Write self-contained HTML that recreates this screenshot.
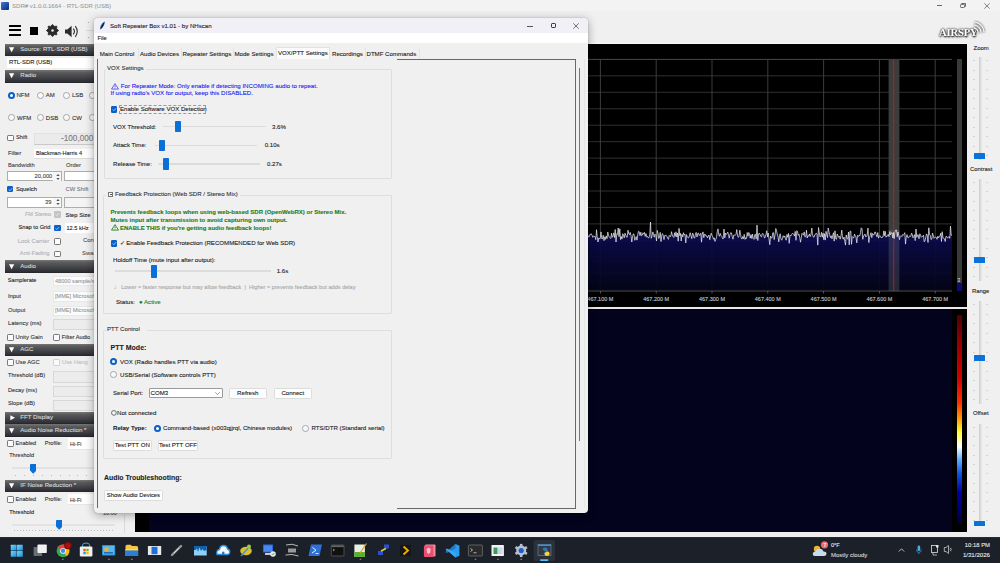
<!DOCTYPE html><html><head><meta charset="utf-8"><style>
*{margin:0;padding:0;box-sizing:border-box}
html,body{width:1000px;height:563px;overflow:hidden;background:#f0f0f0;font-family:"Liberation Sans",sans-serif;position:relative}
.a{position:absolute}
.t{position:absolute;line-height:1;white-space:nowrap;-webkit-text-stroke:0.1px currentColor}
</style></head><body>

<div class="a" style="left:0px;top:0px;width:1000px;height:11px;background:#f3f3f3"></div>
<div class="a" style="left:135px;top:42.6px;width:832.3px;height:1.1999999999999957px;background:#f8f8f8"></div>
<div class="a" style="left:1px;top:2px;width:8px;height:8px;background:linear-gradient(135deg,#3b7bd6,#0a2a7a);border-radius:1px"></div>
<div class="t" style="left:12px;top:3.28px;font-size:6.05px;color:#a0a0a0;">SDR# v1.0.0.1664 - RTL-SDR (USB)</div>
<div class="a" style="left:936.7px;top:5px;width:5.699999999999932px;height:0.7999999999999998px;background:#6a6a6a"></div>
<div class="a" style="left:960.3px;top:3.8px;width:4.900000000000091px;height:4.3999999999999995px;border:0.8px solid #6a6a6a;border-radius:1.2px"></div>
<div class="a" style="left:961.3px;top:2.8px;width:4.900000000000091px;height:4.4px;border-top:0.8px solid #6a6a6a;border-right:0.8px solid #6a6a6a;border-radius:1.2px"></div>
<svg class="a" style="left:984px;top:2.8px" width="6" height="6"><path d="M0.3 0.3L5.7 5.7M5.7 0.3L0.3 5.7" stroke="#6a6a6a" stroke-width="0.8"/></svg>
<div class="a" style="left:9px;top:25px;width:12.3px;height:2.3000000000000007px;background:#000;border-radius:0.5px"></div>
<div class="a" style="left:9px;top:29.2px;width:12.3px;height:2.3000000000000007px;background:#000;border-radius:0.5px"></div>
<div class="a" style="left:9px;top:33.5px;width:12.3px;height:2.299999999999997px;background:#000;border-radius:0.5px"></div>
<div class="a" style="left:29.5px;top:26.5px;width:8.5px;height:8.5px;background:#000"></div>
<svg class="a" style="left:46px;top:24.2px" width="13" height="13"><polygon points="6.50,0.40 8.18,2.43 10.81,2.19 10.57,4.82 12.60,6.50 10.57,8.18 10.81,10.81 8.18,10.57 6.50,12.60 4.82,10.57 2.19,10.81 2.43,8.18 0.40,6.50 2.43,4.82 2.19,2.19 4.82,2.43" fill="#2a2a2a" stroke="#2a2a2a" stroke-width="0.9" stroke-linejoin="round"/><circle cx="6.5" cy="6.5" r="1.25" fill="#f0f0f0"/></svg>
<svg class="a" style="left:64px;top:24.5px" width="15" height="13"><path d="M1 4.6H3.3L7.6 0.8V12.2L3.3 8.4H1z" fill="#2c2c2c"/><path d="M9.3 3.6Q11.6 6.5 9.3 9.4" stroke="#2c2c2c" stroke-width="1.1" fill="none"/><path d="M11.3 1.2Q15.2 6.5 11.3 11.8" stroke="#2c2c2c" stroke-width="1.1" fill="none"/></svg>
<div class="a" style="left:86px;top:29.5px;width:8px;height:1.5px;background:#dcdcdc"></div>
<div class="a" style="left:88.2px;top:21.5px;width:0.5999999999999943px;height:1.0px;background:#aaa"></div>
<div class="a" style="left:88.2px;top:37px;width:0.5999999999999943px;height:1px;background:#aaa"></div>
<div class="a" style="left:5px;top:44px;width:120px;height:12px;background:linear-gradient(#767676,#5a5a5a 20%,#44454a 55%,#2e3036 88%,#222428)"></div>
<svg class="a" style="left:9px;top:47.0px" width="6" height="6"><path d="M0 0.3H5.2L2.6 5.3z" fill="#fff"/></svg>
<div class="t" style="left:20.3px;top:46.16px;font-size:6.1px;color:#d4d8de;">Source: RTL-SDR (USB)</div>
<div class="a" style="left:7px;top:58px;width:118px;height:10px;background:#fff"></div>
<div class="t" style="left:9px;top:60.46px;font-size:5.9px;color:#222;">RTL-SDR (USB)</div>
<div class="a" style="left:5px;top:70px;width:120px;height:12.5px;background:linear-gradient(#767676,#5a5a5a 20%,#44454a 55%,#2e3036 88%,#222428)"></div>
<svg class="a" style="left:9px;top:73.25px" width="6" height="6"><path d="M0 0.3H5.2L2.6 5.3z" fill="#fff"/></svg>
<div class="t" style="left:20.3px;top:72.41px;font-size:6.1px;color:#d4d8de;">Radio</div>
<svg class="a" style="left:8px;top:91.5px" width="7" height="7"><circle cx="3.5" cy="3.5" r="3.5" fill="#0a5fc8"/><circle cx="3.5" cy="3.5" r="1.5" fill="#fff"/></svg>
<div class="t" style="left:16.5px;top:92.21px;font-size:6.0px;color:#333;">NFM</div>
<svg class="a" style="left:36.5px;top:91.5px" width="7" height="7"><circle cx="3.5" cy="3.5" r="3.05" fill="#f8f8f8" stroke="#8a8a8a" stroke-width="0.7"/></svg>
<div class="t" style="left:45.8px;top:92.21px;font-size:6.0px;color:#333;">AM</div>
<svg class="a" style="left:63px;top:91.5px" width="7" height="7"><circle cx="3.5" cy="3.5" r="3.05" fill="#f8f8f8" stroke="#8a8a8a" stroke-width="0.7"/></svg>
<div class="t" style="left:72px;top:92.21px;font-size:6.0px;color:#333;">LSB</div>
<svg class="a" style="left:89px;top:91.5px" width="7" height="7"><circle cx="3.5" cy="3.5" r="3.05" fill="#f8f8f8" stroke="#8a8a8a" stroke-width="0.7"/></svg>
<svg class="a" style="left:8px;top:114.0px" width="7" height="7"><circle cx="3.5" cy="3.5" r="3.05" fill="#f8f8f8" stroke="#8a8a8a" stroke-width="0.7"/></svg>
<div class="t" style="left:17px;top:114.71px;font-size:6.0px;color:#333;">WFM</div>
<svg class="a" style="left:36.5px;top:114.0px" width="7" height="7"><circle cx="3.5" cy="3.5" r="3.05" fill="#f8f8f8" stroke="#8a8a8a" stroke-width="0.7"/></svg>
<div class="t" style="left:45.8px;top:114.71px;font-size:6.0px;color:#333;">DSB</div>
<svg class="a" style="left:63px;top:114.0px" width="7" height="7"><circle cx="3.5" cy="3.5" r="3.05" fill="#f8f8f8" stroke="#8a8a8a" stroke-width="0.7"/></svg>
<div class="t" style="left:72px;top:114.71px;font-size:6.0px;color:#333;">CW</div>
<svg class="a" style="left:89px;top:114.0px" width="7" height="7"><circle cx="3.5" cy="3.5" r="3.05" fill="#f8f8f8" stroke="#8a8a8a" stroke-width="0.7"/></svg>
<div class="a" style="left:7px;top:134.75px;width:6.5px;height:6.5px;border-radius:1.2px;border:0.7px solid #777;background:#fbfbfb"></div>
<div class="t" style="left:16px;top:135.45px;font-size:5.7px;color:#333;">Shift</div>
<div class="a" style="left:34px;top:132.5px;width:91px;height:12.0px;background:#ebebeb;border-top:0.7px solid #e2e2e2;border-bottom:0.9px solid #c8c8c8;border-left:0.7px solid #e0e0e0"></div>
<div class="t" style="left:61px;top:134.85px;font-size:8.2px;color:#7a7a7a;">-100,000</div>
<div class="t" style="left:8px;top:150.96px;font-size:5.9px;color:#333;">Filter</div>
<div class="a" style="left:34px;top:149px;width:91px;height:9.5px;background:#fff;border-bottom:0.7px solid #ddd"></div>
<div class="t" style="left:36px;top:151.30px;font-size:5.6px;color:#222;">Blackman-Harris 4</div>
<div class="t" style="left:8px;top:162.55px;font-size:5.7px;color:#444;">Bandwidth</div>
<div class="t" style="left:66px;top:162.50px;font-size:5.8px;color:#444;">Order</div>
<div class="a" style="left:7px;top:171.4px;width:54.6px;height:10.0px;background:#fff;border:0.8px solid #adadad"></div>
<div class="a" style="left:53.3px;top:172px;width:7.700000000000003px;height:9px;background:#f6f6f6"></div>
<div class="t" style="left:34.6px;top:173.80px;font-size:5.8px;color:#444;">20,000</div>
<svg class="a" style="left:55.5px;top:172.8px" width="4" height="8"><path d="M0.3 3L2 1L3.7 3z" fill="#555"/><path d="M0.3 5L2 7L3.7 5z" fill="#555"/></svg>
<div class="a" style="left:64px;top:171.4px;width:61px;height:10.0px;background:#fff;border:0.8px solid #adadad"></div>
<div class="a" style="left:6.6px;top:185.6px;width:6.8px;height:6.8px;border-radius:1.2px;background:#0b5fc5"><svg class="a" style="left:0;top:0" width="6.8" height="6.8" viewBox="0 0 10 10"><path d="M2.5 5.2L4.3 7L7.6 3.3" stroke="#fff" stroke-width="0.9" fill="none"/></svg></div>
<div class="t" style="left:16px;top:186.50px;font-size:5.8px;color:#222;">Squelch</div>
<div class="t" style="left:65.6px;top:186.70px;font-size:5.8px;color:#707888;">CW Shift</div>
<div class="a" style="left:7px;top:197px;width:54.6px;height:10.5px;background:#fff;border:0.8px solid #adadad"></div>
<div class="a" style="left:53.3px;top:197.6px;width:7.700000000000003px;height:9.400000000000006px;background:#f6f6f6"></div>
<div class="t" style="left:45px;top:199.50px;font-size:5.8px;color:#444;">39</div>
<svg class="a" style="left:55.5px;top:198.3px" width="4" height="8"><path d="M0.3 3L2 1L3.7 3z" fill="#555"/><path d="M0.3 5L2 7L3.7 5z" fill="#555"/></svg>
<div class="a" style="left:64px;top:197px;width:61px;height:10.5px;background:#f4f4f4;border:0.8px solid #adadad"></div>
<div class="t" style="left:24.9px;top:212.10px;font-size:5.6px;color:#b0b0b8;">FM Stereo</div>
<div class="a" style="left:54.3px;top:211.35px;width:6.5px;height:6.5px;border-radius:1.2px;background:#c4c4c4"><svg class="a" style="left:0;top:0" width="6.5" height="6.5" viewBox="0 0 10 10"><path d="M2.5 5.2L4.3 7L7.6 3.3" stroke="#fff" stroke-width="0.9" fill="none"/></svg></div>
<div class="t" style="left:65.6px;top:212.50px;font-size:5.8px;color:#222;">Step Size</div>
<div class="t" style="left:18.5px;top:224.85px;font-size:5.7px;color:#222;">Snap to Grid</div>
<div class="a" style="left:54.3px;top:224.75px;width:6.5px;height:6.5px;border-radius:1.2px;background:#0b5fc5"><svg class="a" style="left:0;top:0" width="6.5" height="6.5" viewBox="0 0 10 10"><path d="M2.5 5.2L4.3 7L7.6 3.3" stroke="#fff" stroke-width="0.9" fill="none"/></svg></div>
<div class="a" style="left:65px;top:223px;width:60px;height:9.599999999999994px;background:#fff"></div>
<div class="t" style="left:66.5px;top:225.60px;font-size:5.6px;color:#222;">12.5 kHz</div>
<div class="t" style="left:17.8px;top:238.53px;font-size:5.75px;color:#b0b0b8;">Lock Carrier</div>
<div class="a" style="left:54.3px;top:238.25px;width:6.5px;height:6.5px;border-radius:1.2px;border:0.7px solid #777;background:#fbfbfb"></div>
<div class="t" style="left:83px;top:238.46px;font-size:5.9px;color:#555;">Con</div>
<div class="t" style="left:19.8px;top:251.00px;font-size:5.8px;color:#b0b0b8;">Anti-Fading</div>
<div class="a" style="left:54.3px;top:250.75px;width:6.5px;height:6.5px;border-radius:1.2px;border:0.7px solid #777;background:#fbfbfb"></div>
<div class="t" style="left:82px;top:250.96px;font-size:5.9px;color:#555;">Swa</div>
<div class="a" style="left:5px;top:260.3px;width:120px;height:12.800000000000011px;background:linear-gradient(#767676,#5a5a5a 20%,#44454a 55%,#2e3036 88%,#222428)"></div>
<svg class="a" style="left:9px;top:263.70000000000005px" width="6" height="6"><path d="M0 0.3H5.2L2.6 5.3z" fill="#fff"/></svg>
<div class="t" style="left:20.3px;top:262.86px;font-size:6.1px;color:#d4d8de;">Audio</div>
<div class="t" style="left:7.8px;top:277.80px;font-size:5.6px;color:#222;">Samplerate</div>
<div class="a" style="left:53.3px;top:275.7px;width:71.7px;height:10.300000000000011px;background:#fbfbfb;border:0.6px solid #e8e8e8"></div>
<div class="t" style="left:55px;top:278.50px;font-size:5.6px;color:#999;">48000 sample/s</div>
<div class="t" style="left:8px;top:293.50px;font-size:5.8px;color:#333;">Input</div>
<div class="a" style="left:53.3px;top:290.5px;width:71.7px;height:11.0px;background:#fbfbfb;border:0.6px solid #e8e8e8"></div>
<div class="t" style="left:55px;top:293.80px;font-size:5.6px;color:#999;">[MME] Microsoft</div>
<div class="t" style="left:8px;top:307.50px;font-size:5.8px;color:#444;">Output</div>
<div class="a" style="left:53.3px;top:305.5px;width:71.7px;height:10.0px;background:#fbfbfb;border:0.6px solid #e8e8e8"></div>
<div class="t" style="left:55px;top:308.30px;font-size:5.6px;color:#999;">[MME] Microsoft</div>
<div class="t" style="left:8px;top:321.20px;font-size:5.8px;color:#333;">Latency (ms)</div>
<div class="a" style="left:53.3px;top:319px;width:71.7px;height:11px;background:#ececec;border:0.7px solid #d8d8d8"></div>
<div class="a" style="left:7.1px;top:334.05px;width:6.5px;height:6.5px;border-radius:1.2px;border:0.7px solid #777;background:#fbfbfb"></div>
<div class="t" style="left:15.6px;top:334.50px;font-size:5.8px;color:#333;">Unity Gain</div>
<div class="a" style="left:53.3px;top:334.05px;width:6.5px;height:6.5px;border-radius:1.2px;border:0.7px solid #777;background:#fbfbfb"></div>
<div class="t" style="left:61.8px;top:334.55px;font-size:5.7px;color:#333;">Filter Audio</div>
<div class="a" style="left:5px;top:344px;width:120px;height:12px;background:linear-gradient(#767676,#5a5a5a 20%,#44454a 55%,#2e3036 88%,#222428)"></div>
<svg class="a" style="left:9px;top:347.0px" width="6" height="6"><path d="M0 0.3H5.2L2.6 5.3z" fill="#fff"/></svg>
<div class="t" style="left:20.3px;top:346.16px;font-size:6.1px;color:#d4d8de;">AGC</div>
<div class="a" style="left:7.1px;top:359.25px;width:6.5px;height:6.5px;border-radius:1.2px;border:0.7px solid #777;background:#fbfbfb"></div>
<div class="t" style="left:15.6px;top:359.70px;font-size:5.8px;color:#333;">Use AGC</div>
<div class="a" style="left:53.3px;top:359.25px;width:6.5px;height:6.5px;border-radius:1.2px;border:0.7px solid #d0d0d0;background:#fbfbfb"></div>
<div class="t" style="left:62px;top:359.70px;font-size:5.8px;color:#c0c0c8;">Use Hang</div>
<div class="t" style="left:8px;top:373.10px;font-size:5.6px;color:#333;">Threshold (dB)</div>
<div class="a" style="left:53.3px;top:370.5px;width:71.7px;height:12.0px;background:#ececec;border:0.7px solid #d8d8d8"></div>
<div class="t" style="left:8px;top:388.05px;font-size:5.7px;color:#333;">Decay (ms)</div>
<div class="a" style="left:53.3px;top:386px;width:71.7px;height:10.5px;background:#ececec;border:0.7px solid #d8d8d8"></div>
<div class="t" style="left:8px;top:401.05px;font-size:5.7px;color:#333;">Slope (dB)</div>
<div class="a" style="left:53.3px;top:399.5px;width:71.7px;height:11.0px;background:#ececec;border:0.7px solid #d8d8d8"></div>
<div class="a" style="left:5px;top:412px;width:120px;height:12px;background:linear-gradient(#767676,#5a5a5a 20%,#44454a 55%,#2e3036 88%,#222428)"></div>
<svg class="a" style="left:9.5px;top:415.2px" width="6" height="6"><path d="M0.3 0.3L5 2.8L0.3 5.3z" fill="#fff"/></svg>
<div class="t" style="left:20.3px;top:414.16px;font-size:6.1px;color:#d4d8de;">FFT Display</div>
<div class="a" style="left:5px;top:424.2px;width:120px;height:12.800000000000011px;background:linear-gradient(#767676,#5a5a5a 20%,#44454a 55%,#2e3036 88%,#222428)"></div>
<svg class="a" style="left:9px;top:427.6px" width="6" height="6"><path d="M0 0.3H5.2L2.6 5.3z" fill="#fff"/></svg>
<div class="t" style="left:20.3px;top:426.76px;font-size:6.1px;color:#d4d8de;">Audio Noise Reduction *</div>
<div class="a" style="left:7.1px;top:440.25px;width:6.5px;height:6.5px;border-radius:1.2px;border:0.7px solid #777;background:#fbfbfb"></div>
<div class="t" style="left:15.6px;top:440.80px;font-size:5.6px;color:#333;">Enabled</div>
<div class="t" style="left:44.7px;top:440.80px;font-size:5.6px;color:#333;">Profile:</div>
<div class="a" style="left:68px;top:437.5px;width:57px;height:12.0px;background:#fff;border-bottom:0.7px solid #e6e6e6"></div>
<div class="t" style="left:70px;top:441.70px;font-size:5.4px;color:#333;">Hi-Fi</div>
<div class="t" style="left:9.2px;top:453.10px;font-size:5.6px;color:#333;">Threshold</div>
<div class="a" style="left:12px;top:467.3px;width:113px;height:2.0px;background:#e2e2e2;border-radius:1px"></div>
<div class="a" style="left:15.0px;top:474.5px;width:0.5999999999999996px;height:1.0px;background:#b8b8b8"></div>
<div class="a" style="left:23.916666666666664px;top:474.5px;width:0.6000000000000014px;height:1.0px;background:#b8b8b8"></div>
<div class="a" style="left:32.83333333333333px;top:474.5px;width:0.6000000000000014px;height:1.0px;background:#b8b8b8"></div>
<div class="a" style="left:41.75px;top:474.5px;width:0.6000000000000014px;height:1.0px;background:#b8b8b8"></div>
<div class="a" style="left:50.666666666666664px;top:474.5px;width:0.6000000000000014px;height:1.0px;background:#b8b8b8"></div>
<div class="a" style="left:59.583333333333336px;top:474.5px;width:0.6000000000000014px;height:1.0px;background:#b8b8b8"></div>
<div class="a" style="left:68.5px;top:474.5px;width:0.5999999999999943px;height:1.0px;background:#b8b8b8"></div>
<div class="a" style="left:77.41666666666666px;top:474.5px;width:0.5999999999999943px;height:1.0px;background:#b8b8b8"></div>
<div class="a" style="left:86.33333333333333px;top:474.5px;width:0.5999999999999943px;height:1.0px;background:#b8b8b8"></div>
<div class="a" style="left:95.25px;top:474.5px;width:0.5999999999999943px;height:1.0px;background:#b8b8b8"></div>
<div class="a" style="left:104.16666666666667px;top:474.5px;width:0.5999999999999943px;height:1.0px;background:#b8b8b8"></div>
<div class="a" style="left:113.08333333333333px;top:474.5px;width:0.5999999999999943px;height:1.0px;background:#b8b8b8"></div>
<div class="a" style="left:122.0px;top:474.5px;width:0.5999999999999943px;height:1.0px;background:#b8b8b8"></div>
<svg class="a" style="left:29.8px;top:464px" width="6.4" height="9.7"><path d="M0 0.8Q0 0 0.8 0H5.6Q6.4 0 6.4 0.8V6.5L3.2 9.7L0 6.5z" fill="#0a6fd6"/></svg>
<div class="a" style="left:5px;top:480px;width:120px;height:12px;background:linear-gradient(#767676,#5a5a5a 20%,#44454a 55%,#2e3036 88%,#222428)"></div>
<svg class="a" style="left:9px;top:483.0px" width="6" height="6"><path d="M0 0.3H5.2L2.6 5.3z" fill="#fff"/></svg>
<div class="t" style="left:20.3px;top:482.16px;font-size:6.1px;color:#d4d8de;">IF Noise Reduction *</div>
<div class="a" style="left:7.1px;top:496.25px;width:6.5px;height:6.5px;border-radius:1.2px;border:0.7px solid #777;background:#fbfbfb"></div>
<div class="t" style="left:15.6px;top:496.80px;font-size:5.6px;color:#333;">Enabled</div>
<div class="t" style="left:44.7px;top:496.80px;font-size:5.6px;color:#333;">Profile:</div>
<div class="a" style="left:68px;top:494px;width:57px;height:11px;background:#fff;border-bottom:0.7px solid #e6e6e6"></div>
<div class="t" style="left:70px;top:497.70px;font-size:5.4px;color:#333;">Hi-Fi</div>
<div class="t" style="left:9.2px;top:509.60px;font-size:5.6px;color:#222;">Threshold</div>
<div class="a" style="left:12px;top:523.5px;width:103px;height:2.0px;background:#e2e2e2;border-radius:1px"></div>
<div class="a" style="left:14.0px;top:530px;width:0.5999999999999996px;height:1px;background:#b8b8b8"></div>
<div class="a" style="left:17.0625px;top:530px;width:0.6000000000000014px;height:1px;background:#b8b8b8"></div>
<div class="a" style="left:20.125px;top:530px;width:0.6000000000000014px;height:1px;background:#b8b8b8"></div>
<div class="a" style="left:23.1875px;top:530px;width:0.6000000000000014px;height:1px;background:#b8b8b8"></div>
<div class="a" style="left:26.25px;top:530px;width:0.6000000000000014px;height:1px;background:#b8b8b8"></div>
<div class="a" style="left:29.3125px;top:530px;width:0.6000000000000014px;height:1px;background:#b8b8b8"></div>
<div class="a" style="left:32.375px;top:530px;width:0.6000000000000014px;height:1px;background:#b8b8b8"></div>
<div class="a" style="left:35.4375px;top:530px;width:0.6000000000000014px;height:1px;background:#b8b8b8"></div>
<div class="a" style="left:38.5px;top:530px;width:0.6000000000000014px;height:1px;background:#b8b8b8"></div>
<div class="a" style="left:41.5625px;top:530px;width:0.6000000000000014px;height:1px;background:#b8b8b8"></div>
<div class="a" style="left:44.625px;top:530px;width:0.6000000000000014px;height:1px;background:#b8b8b8"></div>
<div class="a" style="left:47.6875px;top:530px;width:0.6000000000000014px;height:1px;background:#b8b8b8"></div>
<div class="a" style="left:50.75px;top:530px;width:0.6000000000000014px;height:1px;background:#b8b8b8"></div>
<div class="a" style="left:53.8125px;top:530px;width:0.6000000000000014px;height:1px;background:#b8b8b8"></div>
<div class="a" style="left:56.875px;top:530px;width:0.6000000000000014px;height:1px;background:#b8b8b8"></div>
<div class="a" style="left:59.9375px;top:530px;width:0.6000000000000014px;height:1px;background:#b8b8b8"></div>
<div class="a" style="left:63.0px;top:530px;width:0.6000000000000014px;height:1px;background:#b8b8b8"></div>
<div class="a" style="left:66.0625px;top:530px;width:0.5999999999999943px;height:1px;background:#b8b8b8"></div>
<div class="a" style="left:69.125px;top:530px;width:0.5999999999999943px;height:1px;background:#b8b8b8"></div>
<div class="a" style="left:72.1875px;top:530px;width:0.5999999999999943px;height:1px;background:#b8b8b8"></div>
<div class="a" style="left:75.25px;top:530px;width:0.5999999999999943px;height:1px;background:#b8b8b8"></div>
<div class="a" style="left:78.3125px;top:530px;width:0.5999999999999943px;height:1px;background:#b8b8b8"></div>
<div class="a" style="left:81.375px;top:530px;width:0.5999999999999943px;height:1px;background:#b8b8b8"></div>
<div class="a" style="left:84.4375px;top:530px;width:0.5999999999999943px;height:1px;background:#b8b8b8"></div>
<div class="a" style="left:87.5px;top:530px;width:0.5999999999999943px;height:1px;background:#b8b8b8"></div>
<div class="a" style="left:90.5625px;top:530px;width:0.5999999999999943px;height:1px;background:#b8b8b8"></div>
<div class="a" style="left:93.625px;top:530px;width:0.5999999999999943px;height:1px;background:#b8b8b8"></div>
<div class="a" style="left:96.6875px;top:530px;width:0.5999999999999943px;height:1px;background:#b8b8b8"></div>
<div class="a" style="left:99.75px;top:530px;width:0.5999999999999943px;height:1px;background:#b8b8b8"></div>
<div class="a" style="left:102.8125px;top:530px;width:0.5999999999999943px;height:1px;background:#b8b8b8"></div>
<div class="a" style="left:105.875px;top:530px;width:0.5999999999999943px;height:1px;background:#b8b8b8"></div>
<div class="a" style="left:108.9375px;top:530px;width:0.5999999999999943px;height:1px;background:#b8b8b8"></div>
<div class="a" style="left:112.0px;top:530px;width:0.5999999999999943px;height:1px;background:#b8b8b8"></div>
<svg class="a" style="left:55.8px;top:520px" width="6.4" height="9.7"><path d="M0 0.8Q0 0 0.8 0H5.6Q6.4 0 6.4 0.8V6.5L3.2 9.7L0 6.5z" fill="#0a6fd6"/></svg>
<div class="a" style="left:124px;top:514px;width:1px;height:23px;background:#dadada"></div>
<div class="t" style="left:103px;top:510.55px;font-size:5.5px;color:#555;">10.00</div>
<div class="a" style="left:135px;top:43.8px;width:832.3px;height:262.8px;background:#000"></div>
<svg class="a" style="left:0;top:0" width="1000" height="563"><defs><linearGradient id="fg" x1="0" y1="0" x2="0" y2="1"><stop offset="0" stop-color="#0e0e60"/><stop offset="0.5" stop-color="#080838"/><stop offset="1" stop-color="#040418"/></linearGradient></defs><rect x="136" y="58.90" width="816" height="1" fill="#4a4a4a"/><rect x="136" y="75.35" width="816" height="1" fill="#303030"/><rect x="136" y="91.80" width="816" height="1" fill="#303030"/><rect x="136" y="108.25" width="816" height="1" fill="#303030"/><rect x="136" y="124.70" width="816" height="1" fill="#303030"/><rect x="136" y="141.15" width="816" height="1" fill="#303030"/><rect x="136" y="157.60" width="816" height="1" fill="#303030"/><rect x="136" y="174.05" width="816" height="1" fill="#303030"/><rect x="136" y="190.50" width="816" height="1" fill="#303030"/><rect x="136" y="206.95" width="816" height="1" fill="#303030"/><rect x="136" y="223.40" width="816" height="1" fill="#303030"/><rect x="136" y="239.85" width="816" height="1" fill="#303030"/><rect x="136" y="256.30" width="816" height="1" fill="#303030"/><rect x="136" y="272.75" width="816" height="1" fill="#303030"/><rect x="136" y="289.20" width="816" height="1" fill="#303030"/><rect x="153.50" y="59" width="1" height="232" fill="#3c3c3c"/><rect x="209.30" y="59" width="1" height="232" fill="#3c3c3c"/><rect x="265.10" y="59" width="1" height="232" fill="#3c3c3c"/><rect x="320.90" y="59" width="1" height="232" fill="#3c3c3c"/><rect x="376.70" y="59" width="1" height="232" fill="#3c3c3c"/><rect x="432.50" y="59" width="1" height="232" fill="#3c3c3c"/><rect x="488.30" y="59" width="1" height="232" fill="#3c3c3c"/><rect x="544.10" y="59" width="1" height="232" fill="#3c3c3c"/><rect x="599.90" y="59" width="1" height="232" fill="#3c3c3c"/><rect x="655.70" y="59" width="1" height="232" fill="#3c3c3c"/><rect x="711.50" y="59" width="1" height="232" fill="#3c3c3c"/><rect x="767.30" y="59" width="1" height="232" fill="#3c3c3c"/><rect x="823.10" y="59" width="1" height="232" fill="#3c3c3c"/><rect x="878.90" y="59" width="1" height="232" fill="#3c3c3c"/><rect x="934.70" y="59" width="1" height="232" fill="#3c3c3c"/><rect x="888.6" y="59" width="10.8" height="232" fill="#3c3c3c"/><polygon points="136,291 136.0,234.8 136.8,237.0 137.5,232.9 138.2,236.7 139.0,236.2 139.8,234.2 140.5,229.2 141.2,240.3 142.0,237.3 142.8,237.2 143.5,233.0 144.2,238.1 145.0,233.2 145.8,236.6 146.5,234.8 147.2,233.4 148.0,233.6 148.8,243.4 149.5,234.7 150.2,235.6 151.0,233.8 151.8,239.6 152.5,238.6 153.2,234.4 154.0,240.9 154.8,240.1 155.5,236.2 156.2,236.8 157.0,231.0 157.8,239.2 158.5,237.9 159.2,230.2 160.0,237.1 160.8,235.1 161.5,227.7 162.2,234.3 163.0,234.2 163.8,232.3 164.5,236.6 165.2,229.7 166.0,234.8 166.8,234.7 167.5,235.6 168.2,242.0 169.0,234.3 169.8,234.4 170.5,240.8 171.2,228.1 172.0,234.2 172.8,234.2 173.5,232.3 174.2,238.4 175.0,235.3 175.8,238.3 176.5,234.5 177.2,237.3 178.0,237.5 178.8,234.3 179.5,235.1 180.2,237.7 181.0,242.7 181.8,235.0 182.5,236.6 183.2,239.4 184.0,235.9 184.8,234.3 185.5,233.7 186.2,235.8 187.0,233.2 187.8,237.3 188.5,239.2 189.2,240.6 190.0,234.0 190.8,230.1 191.5,228.8 192.2,234.4 193.0,235.5 193.8,237.9 194.5,239.8 195.2,240.2 196.0,229.8 196.8,243.4 197.5,235.6 198.2,235.7 199.0,233.1 199.8,234.6 200.5,233.5 201.2,234.7 202.0,235.9 202.8,229.1 203.5,234.4 204.2,232.5 205.0,240.4 205.8,230.7 206.5,236.5 207.2,236.6 208.0,233.0 208.8,231.1 209.5,239.2 210.2,240.2 211.0,226.7 211.8,236.2 212.5,234.5 213.2,231.9 214.0,238.1 214.8,235.8 215.5,237.3 216.2,223.9 217.0,237.6 217.8,237.7 218.5,238.8 219.2,233.7 220.0,234.5 220.8,236.0 221.5,236.2 222.2,234.7 223.0,237.6 223.8,234.5 224.5,236.0 225.2,236.3 226.0,234.7 226.8,238.0 227.5,233.7 228.2,234.9 229.0,232.4 229.8,236.9 230.5,238.1 231.2,235.2 232.0,234.9 232.8,236.3 233.5,236.1 234.2,236.5 235.0,235.6 235.8,237.9 236.5,243.1 237.2,233.7 238.0,235.4 238.8,235.6 239.5,235.2 240.2,235.5 241.0,237.9 241.8,235.8 242.5,233.0 243.2,231.7 244.0,238.2 244.8,239.3 245.5,232.2 246.2,232.1 247.0,238.2 247.8,231.0 248.5,227.4 249.2,233.5 250.0,231.7 250.8,240.2 251.5,235.5 252.2,232.1 253.0,235.5 253.8,236.6 254.5,238.8 255.2,235.0 256.0,232.4 256.8,232.7 257.5,226.5 258.2,239.0 259.0,234.4 259.8,233.4 260.5,237.0 261.2,228.6 262.0,238.6 262.8,234.9 263.5,234.1 264.2,234.7 265.0,229.5 265.8,235.2 266.5,235.7 267.2,235.5 268.0,240.1 268.8,237.6 269.5,239.6 270.2,233.5 271.0,239.4 271.8,235.5 272.5,239.9 273.2,238.8 274.0,233.6 274.8,235.4 275.5,231.1 276.2,230.8 277.0,235.1 277.8,232.3 278.5,236.9 279.2,234.8 280.0,237.7 280.8,235.2 281.5,236.4 282.2,237.0 283.0,243.6 283.8,230.1 284.5,234.8 285.2,236.6 286.0,235.5 286.8,232.5 287.5,237.7 288.2,236.4 289.0,236.8 289.8,234.0 290.5,244.0 291.2,233.9 292.0,225.7 292.8,236.1 293.5,237.7 294.2,235.1 295.0,239.8 295.8,233.8 296.5,240.4 297.2,236.7 298.0,237.0 298.8,237.1 299.5,231.7 300.2,239.1 301.0,228.4 301.8,237.3 302.5,235.6 303.2,237.4 304.0,233.5 304.8,240.9 305.5,231.6 306.2,237.6 307.0,237.6 307.8,242.9 308.5,235.7 309.2,233.1 310.0,231.8 310.8,237.6 311.5,237.1 312.2,235.2 313.0,239.0 313.8,232.4 314.5,235.2 315.2,233.6 316.0,235.6 316.8,235.7 317.5,237.4 318.2,235.1 319.0,238.6 319.8,236.5 320.5,236.1 321.2,235.1 322.0,236.5 322.8,235.7 323.5,234.3 324.2,237.5 325.0,230.3 325.8,237.6 326.5,237.6 327.2,235.8 328.0,235.5 328.8,238.6 329.5,235.1 330.2,230.1 331.0,232.2 331.8,239.4 332.5,236.2 333.2,235.8 334.0,237.8 334.8,235.3 335.5,233.5 336.2,236.2 337.0,238.0 337.8,232.0 338.5,232.2 339.2,238.9 340.0,238.3 340.8,233.0 341.5,236.1 342.2,240.7 343.0,237.8 343.8,230.5 344.5,238.4 345.2,242.7 346.0,233.4 346.8,236.2 347.5,234.0 348.2,234.1 349.0,236.4 349.8,233.0 350.5,234.8 351.2,237.3 352.0,232.6 352.8,237.7 353.5,233.5 354.2,236.8 355.0,233.6 355.8,237.9 356.5,231.7 357.2,233.6 358.0,243.1 358.8,233.3 359.5,238.9 360.2,237.6 361.0,228.9 361.8,234.6 362.5,236.0 363.2,236.9 364.0,238.1 364.8,234.2 365.5,236.0 366.2,233.5 367.0,236.1 367.8,238.4 368.5,234.5 369.2,235.7 370.0,238.4 370.8,238.1 371.5,232.8 372.2,239.5 373.0,233.4 373.8,235.6 374.5,234.1 375.2,235.7 376.0,234.7 376.8,235.4 377.5,234.5 378.2,235.4 379.0,241.5 379.8,227.9 380.5,228.2 381.2,235.9 382.0,238.0 382.8,236.6 383.5,236.1 384.2,234.0 385.0,225.9 385.8,235.4 386.5,236.9 387.2,234.4 388.0,231.8 388.8,240.0 389.5,239.6 390.2,235.3 391.0,233.1 391.8,234.2 392.5,240.6 393.2,237.1 394.0,226.4 394.8,233.3 395.5,229.4 396.2,238.0 397.0,234.7 397.8,236.6 398.5,236.7 399.2,239.4 400.0,236.3 400.8,236.5 401.5,235.5 402.2,235.9 403.0,229.1 403.8,237.9 404.5,232.6 405.2,240.1 406.0,237.0 406.8,234.9 407.5,236.2 408.2,233.8 409.0,232.7 409.8,231.0 410.5,233.5 411.2,229.8 412.0,233.6 412.8,230.2 413.5,236.3 414.2,232.1 415.0,235.9 415.8,235.2 416.5,235.4 417.2,232.9 418.0,232.5 418.8,232.2 419.5,233.6 420.2,230.1 421.0,236.5 421.8,242.9 422.5,241.1 423.2,234.3 424.0,234.0 424.8,231.0 425.5,238.1 426.2,230.0 427.0,243.4 427.8,236.7 428.5,237.4 429.2,231.8 430.0,240.2 430.8,237.9 431.5,233.8 432.2,237.4 433.0,238.4 433.8,236.1 434.5,233.5 435.2,235.0 436.0,237.4 436.8,230.0 437.5,236.0 438.2,233.7 439.0,237.7 439.8,234.7 440.5,234.7 441.2,234.6 442.0,233.7 442.8,237.8 443.5,237.4 444.2,235.8 445.0,237.1 445.8,234.1 446.5,233.9 447.2,233.4 448.0,235.4 448.8,233.7 449.5,229.6 450.2,236.9 451.0,236.4 451.8,234.1 452.5,236.9 453.2,237.7 454.0,236.8 454.8,235.2 455.5,233.7 456.2,236.3 457.0,238.4 457.8,236.1 458.5,233.9 459.2,235.9 460.0,232.1 460.8,237.1 461.5,239.1 462.2,232.1 463.0,233.1 463.8,236.2 464.5,234.6 465.2,231.5 466.0,231.8 466.8,237.8 467.5,238.1 468.2,237.7 469.0,238.8 469.8,234.2 470.5,231.4 471.2,235.2 472.0,236.6 472.8,239.8 473.5,234.9 474.2,230.4 475.0,234.6 475.8,232.9 476.5,233.5 477.2,235.2 478.0,236.4 478.8,230.3 479.5,238.1 480.2,234.9 481.0,234.5 481.8,239.0 482.5,235.2 483.2,244.2 484.0,235.1 484.8,237.6 485.5,234.0 486.2,233.2 487.0,239.7 487.8,235.7 488.5,239.5 489.2,234.2 490.0,235.9 490.8,232.9 491.5,238.6 492.2,233.0 493.0,236.5 493.8,233.9 494.5,238.2 495.2,233.0 496.0,238.5 496.8,236.7 497.5,235.7 498.2,235.2 499.0,237.0 499.8,233.1 500.5,235.0 501.2,235.0 502.0,238.9 502.8,230.7 503.5,232.5 504.2,240.4 505.0,236.3 505.8,238.5 506.5,236.9 507.2,232.9 508.0,232.6 508.8,231.3 509.5,232.1 510.2,231.7 511.0,230.8 511.8,236.3 512.5,237.0 513.2,229.3 514.0,231.9 514.8,233.0 515.5,232.8 516.2,236.6 517.0,237.7 517.8,230.9 518.5,234.2 519.2,238.3 520.0,236.9 520.8,235.9 521.5,238.4 522.2,235.8 523.0,234.4 523.8,239.2 524.5,234.9 525.2,234.1 526.0,240.1 526.8,236.0 527.5,236.2 528.2,231.0 529.0,234.7 529.8,232.4 530.5,236.0 531.2,235.5 532.0,235.3 532.8,233.8 533.5,232.7 534.2,234.1 535.0,233.0 535.8,232.3 536.5,236.3 537.2,231.8 538.0,236.7 538.8,233.2 539.5,234.4 540.2,238.4 541.0,243.7 541.8,232.3 542.5,237.9 543.2,230.0 544.0,233.4 544.8,234.5 545.5,234.8 546.2,236.5 547.0,237.4 547.8,234.6 548.5,235.4 549.2,240.3 550.0,235.8 550.8,233.4 551.5,231.7 552.2,236.1 553.0,233.1 553.8,238.3 554.5,238.3 555.2,235.4 556.0,236.4 556.8,234.0 557.5,231.8 558.2,235.8 559.0,236.1 559.8,223.2 560.5,236.3 561.2,236.0 562.0,236.4 562.8,234.9 563.5,235.3 564.2,239.2 565.0,233.9 565.8,240.1 566.5,231.8 567.2,240.5 568.0,234.4 568.8,231.5 569.5,239.5 570.2,233.9 571.0,234.5 571.8,237.5 572.5,233.8 573.2,235.6 574.0,240.8 574.8,233.2 575.5,240.5 576.2,233.1 577.0,231.5 577.8,236.1 578.5,234.0 579.2,235.0 580.0,234.8 580.8,241.0 581.5,236.7 582.2,234.7 583.0,236.3 583.8,238.7 584.5,245.7 585.2,234.9 586.0,239.9 586.8,233.2 587.5,235.6 588.2,235.6 589.0,237.2 589.8,234.4 590.5,235.0 591.2,233.6 592.0,235.2 592.8,237.4 593.5,235.8 594.2,236.5 595.0,236.5 595.8,239.7 596.5,229.7 597.2,236.4 598.0,242.0 598.8,237.9 599.5,238.8 600.2,238.7 601.0,231.9 601.8,238.8 602.5,238.8 603.2,235.2 604.0,240.6 604.8,236.8 605.5,239.4 606.2,235.9 607.0,238.6 607.8,232.1 608.5,235.2 609.2,237.0 610.0,237.8 610.8,238.5 611.5,233.2 612.2,237.4 613.0,235.9 613.8,232.9 614.5,237.6 615.2,229.5 616.0,242.0 616.8,233.7 617.5,234.4 618.2,228.0 619.0,236.6 619.8,228.8 620.5,239.6 621.2,236.4 622.0,239.1 622.8,233.7 623.5,234.9 624.2,237.9 625.0,233.2 625.8,235.3 626.5,237.1 627.2,237.3 628.0,230.2 628.8,233.9 629.5,234.7 630.2,232.4 631.0,235.6 631.8,242.0 632.5,236.9 633.2,233.9 634.0,234.1 634.8,240.3 635.5,238.2 636.2,236.6 637.0,240.1 637.8,234.3 638.5,231.3 639.2,231.7 640.0,235.7 640.8,232.2 641.5,235.7 642.2,235.3 643.0,232.8 643.8,234.2 644.5,232.4 645.2,236.4 646.0,233.6 646.8,237.2 647.5,236.5 648.2,237.8 649.0,237.7 649.8,234.3 650.5,222.0 651.2,238.3 652.0,236.0 652.8,231.9 653.5,233.4 654.2,237.2 655.0,234.2 655.8,235.3 656.5,241.0 657.2,230.4 658.0,233.5 658.8,238.5 659.5,237.1 660.2,232.4 661.0,241.6 661.8,235.1 662.5,233.6 663.2,235.4 664.0,239.6 664.8,235.3 665.5,235.4 666.2,235.3 667.0,236.6 667.8,238.7 668.5,239.3 669.2,235.4 670.0,236.5 670.8,236.3 671.5,231.7 672.2,234.5 673.0,236.6 673.8,237.5 674.5,232.8 675.2,236.4 676.0,231.8 676.8,237.0 677.5,233.0 678.2,241.2 679.0,228.4 679.8,235.7 680.5,233.4 681.2,241.0 682.0,234.3 682.8,236.9 683.5,232.7 684.2,234.9 685.0,234.2 685.8,242.9 686.5,234.6 687.2,236.9 688.0,237.7 688.8,237.8 689.5,235.0 690.2,232.7 691.0,236.0 691.8,238.7 692.5,233.1 693.2,234.0 694.0,238.0 694.8,237.9 695.5,233.4 696.2,232.4 697.0,237.0 697.8,233.4 698.5,233.1 699.2,235.5 700.0,235.0 700.8,233.2 701.5,242.2 702.2,234.3 703.0,231.9 703.8,237.7 704.5,234.2 705.2,234.2 706.0,236.3 706.8,235.7 707.5,237.9 708.2,236.1 709.0,235.0 709.8,239.7 710.5,235.9 711.2,233.2 712.0,235.5 712.8,236.9 713.5,239.3 714.2,237.8 715.0,241.4 715.8,239.3 716.5,237.5 717.2,231.9 718.0,228.9 718.8,235.0 719.5,236.3 720.2,233.4 721.0,235.5 721.8,236.5 722.5,238.5 723.2,238.9 724.0,229.1 724.8,237.8 725.5,233.1 726.2,234.5 727.0,233.5 727.8,232.1 728.5,234.8 729.2,238.2 730.0,234.6 730.8,232.5 731.5,233.0 732.2,236.5 733.0,239.2 733.8,235.0 734.5,235.1 735.2,235.4 736.0,234.2 736.8,229.6 737.5,235.0 738.2,237.3 739.0,236.7 739.8,230.2 740.5,234.3 741.2,238.0 742.0,239.1 742.8,236.5 743.5,238.7 744.2,234.4 745.0,239.4 745.8,237.6 746.5,238.5 747.2,232.5 748.0,236.2 748.8,232.5 749.5,233.9 750.2,238.1 751.0,234.6 751.8,238.5 752.5,234.1 753.2,238.4 754.0,239.4 754.8,234.5 755.5,234.4 756.2,239.1 757.0,225.1 757.8,240.5 758.5,234.0 759.2,233.1 760.0,234.4 760.8,236.4 761.5,236.9 762.2,233.8 763.0,233.5 763.8,234.8 764.5,238.1 765.2,236.9 766.0,234.4 766.8,230.7 767.5,236.9 768.2,233.0 769.0,238.8 769.8,244.7 770.5,236.1 771.2,237.9 772.0,238.1 772.8,232.8 773.5,232.8 774.2,239.6 775.0,234.9 775.8,228.5 776.5,230.5 777.2,233.9 778.0,236.6 778.8,241.9 779.5,236.1 780.2,233.7 781.0,239.1 781.8,240.2 782.5,238.1 783.2,235.7 784.0,237.3 784.8,235.9 785.5,238.6 786.2,240.2 787.0,234.5 787.8,237.3 788.5,233.4 789.2,243.3 790.0,235.2 790.8,236.0 791.5,234.4 792.2,233.5 793.0,233.6 793.8,234.2 794.5,236.1 795.2,231.4 796.0,240.3 796.8,230.6 797.5,231.4 798.2,235.3 799.0,234.2 799.8,237.7 800.5,242.2 801.2,238.2 802.0,233.3 802.8,234.5 803.5,235.0 804.2,231.9 805.0,237.1 805.8,236.4 806.5,230.2 807.2,238.0 808.0,235.5 808.8,236.1 809.5,233.9 810.2,236.6 811.0,234.7 811.8,228.1 812.5,234.6 813.2,236.8 814.0,237.3 814.8,234.6 815.5,234.4 816.2,233.1 817.0,233.8 817.8,245.1 818.5,227.6 819.2,232.1 820.0,236.9 820.8,236.4 821.5,232.3 822.2,237.2 823.0,233.2 823.8,239.7 824.5,233.7 825.2,240.1 826.0,231.3 826.8,234.9 827.5,237.6 828.2,228.0 829.0,231.8 829.8,235.5 830.5,237.6 831.2,235.7 832.0,238.9 832.8,235.1 833.5,232.7 834.2,241.1 835.0,230.8 835.8,238.9 836.5,239.3 837.2,234.1 838.0,235.7 838.8,237.4 839.5,236.3 840.2,239.2 841.0,235.6 841.8,230.1 842.5,237.8 843.2,239.2 844.0,237.0 844.8,241.3 845.5,245.1 846.2,235.0 847.0,238.3 847.8,239.3 848.5,232.0 849.2,244.9 850.0,231.2 850.8,231.2 851.5,244.3 852.2,236.6 853.0,237.5 853.8,237.8 854.5,234.1 855.2,235.5 856.0,237.1 856.8,242.9 857.5,235.4 858.2,236.6 859.0,235.2 859.8,235.8 860.5,232.5 861.2,227.8 862.0,228.7 862.8,239.3 863.5,235.8 864.2,235.5 865.0,234.0 865.8,237.0 866.5,236.3 867.2,235.0 868.0,228.1 868.8,242.6 869.5,237.6 870.2,235.4 871.0,232.7 871.8,237.7 872.5,233.5 873.2,234.9 874.0,234.9 874.8,232.0 875.5,232.0 876.2,234.9 877.0,236.9 877.8,232.6 878.5,238.2 879.2,236.3 880.0,235.5 880.8,236.9 881.5,238.0 882.2,237.0 883.0,237.0 883.8,230.8 884.5,235.7 885.2,231.3 886.0,237.2 886.8,236.1 887.5,236.1 888.2,234.4 889.0,236.6 889.8,231.6 890.5,234.9 891.2,233.1 892.0,232.6 892.8,238.0 893.5,232.5 894.2,238.6 895.0,232.1 895.8,229.9 896.5,230.1 897.2,236.8 898.0,232.0 898.8,235.7 899.5,239.7 900.2,236.6 901.0,235.7 901.8,236.6 902.5,234.6 903.2,235.1 904.0,234.4 904.8,232.7 905.5,244.1 906.2,237.6 907.0,234.6 907.8,237.6 908.5,237.8 909.2,236.3 910.0,235.8 910.8,236.4 911.5,233.1 912.2,234.1 913.0,237.9 913.8,236.3 914.5,234.7 915.2,240.6 916.0,229.0 916.8,237.4 917.5,234.9 918.2,234.8 919.0,238.8 919.8,233.8 920.5,234.9 921.2,237.4 922.0,236.5 922.8,236.3 923.5,235.2 924.2,241.8 925.0,240.8 925.8,236.9 926.5,233.9 927.2,234.9 928.0,242.5 928.8,227.8 929.5,234.3 930.2,235.1 931.0,239.6 931.8,239.1 932.5,233.1 933.2,235.1 934.0,238.3 934.8,237.3 935.5,237.0 936.2,237.3 937.0,239.3 937.8,236.3 938.5,238.0 939.2,236.3 940.0,236.1 940.8,233.1 941.5,241.5 942.2,231.7 943.0,238.1 943.8,238.3 944.5,238.8 945.2,241.5 946.0,236.3 946.8,236.5 947.5,237.9 948.2,237.7 949.0,236.5 949.8,238.3 950.5,226.1 951.2,235.4 952.0,234.7 952,291" fill="url(#fg)" opacity="0.93"/><rect x="888.6" y="230" width="10.8" height="61" fill="#909090" opacity="0.22"/><rect x="893.3" y="59" width="0.9" height="232" fill="#a82828"/><polyline points="136.0,234.8 136.8,237.0 137.5,232.9 138.2,236.7 139.0,236.2 139.8,234.2 140.5,229.2 141.2,240.3 142.0,237.3 142.8,237.2 143.5,233.0 144.2,238.1 145.0,233.2 145.8,236.6 146.5,234.8 147.2,233.4 148.0,233.6 148.8,243.4 149.5,234.7 150.2,235.6 151.0,233.8 151.8,239.6 152.5,238.6 153.2,234.4 154.0,240.9 154.8,240.1 155.5,236.2 156.2,236.8 157.0,231.0 157.8,239.2 158.5,237.9 159.2,230.2 160.0,237.1 160.8,235.1 161.5,227.7 162.2,234.3 163.0,234.2 163.8,232.3 164.5,236.6 165.2,229.7 166.0,234.8 166.8,234.7 167.5,235.6 168.2,242.0 169.0,234.3 169.8,234.4 170.5,240.8 171.2,228.1 172.0,234.2 172.8,234.2 173.5,232.3 174.2,238.4 175.0,235.3 175.8,238.3 176.5,234.5 177.2,237.3 178.0,237.5 178.8,234.3 179.5,235.1 180.2,237.7 181.0,242.7 181.8,235.0 182.5,236.6 183.2,239.4 184.0,235.9 184.8,234.3 185.5,233.7 186.2,235.8 187.0,233.2 187.8,237.3 188.5,239.2 189.2,240.6 190.0,234.0 190.8,230.1 191.5,228.8 192.2,234.4 193.0,235.5 193.8,237.9 194.5,239.8 195.2,240.2 196.0,229.8 196.8,243.4 197.5,235.6 198.2,235.7 199.0,233.1 199.8,234.6 200.5,233.5 201.2,234.7 202.0,235.9 202.8,229.1 203.5,234.4 204.2,232.5 205.0,240.4 205.8,230.7 206.5,236.5 207.2,236.6 208.0,233.0 208.8,231.1 209.5,239.2 210.2,240.2 211.0,226.7 211.8,236.2 212.5,234.5 213.2,231.9 214.0,238.1 214.8,235.8 215.5,237.3 216.2,223.9 217.0,237.6 217.8,237.7 218.5,238.8 219.2,233.7 220.0,234.5 220.8,236.0 221.5,236.2 222.2,234.7 223.0,237.6 223.8,234.5 224.5,236.0 225.2,236.3 226.0,234.7 226.8,238.0 227.5,233.7 228.2,234.9 229.0,232.4 229.8,236.9 230.5,238.1 231.2,235.2 232.0,234.9 232.8,236.3 233.5,236.1 234.2,236.5 235.0,235.6 235.8,237.9 236.5,243.1 237.2,233.7 238.0,235.4 238.8,235.6 239.5,235.2 240.2,235.5 241.0,237.9 241.8,235.8 242.5,233.0 243.2,231.7 244.0,238.2 244.8,239.3 245.5,232.2 246.2,232.1 247.0,238.2 247.8,231.0 248.5,227.4 249.2,233.5 250.0,231.7 250.8,240.2 251.5,235.5 252.2,232.1 253.0,235.5 253.8,236.6 254.5,238.8 255.2,235.0 256.0,232.4 256.8,232.7 257.5,226.5 258.2,239.0 259.0,234.4 259.8,233.4 260.5,237.0 261.2,228.6 262.0,238.6 262.8,234.9 263.5,234.1 264.2,234.7 265.0,229.5 265.8,235.2 266.5,235.7 267.2,235.5 268.0,240.1 268.8,237.6 269.5,239.6 270.2,233.5 271.0,239.4 271.8,235.5 272.5,239.9 273.2,238.8 274.0,233.6 274.8,235.4 275.5,231.1 276.2,230.8 277.0,235.1 277.8,232.3 278.5,236.9 279.2,234.8 280.0,237.7 280.8,235.2 281.5,236.4 282.2,237.0 283.0,243.6 283.8,230.1 284.5,234.8 285.2,236.6 286.0,235.5 286.8,232.5 287.5,237.7 288.2,236.4 289.0,236.8 289.8,234.0 290.5,244.0 291.2,233.9 292.0,225.7 292.8,236.1 293.5,237.7 294.2,235.1 295.0,239.8 295.8,233.8 296.5,240.4 297.2,236.7 298.0,237.0 298.8,237.1 299.5,231.7 300.2,239.1 301.0,228.4 301.8,237.3 302.5,235.6 303.2,237.4 304.0,233.5 304.8,240.9 305.5,231.6 306.2,237.6 307.0,237.6 307.8,242.9 308.5,235.7 309.2,233.1 310.0,231.8 310.8,237.6 311.5,237.1 312.2,235.2 313.0,239.0 313.8,232.4 314.5,235.2 315.2,233.6 316.0,235.6 316.8,235.7 317.5,237.4 318.2,235.1 319.0,238.6 319.8,236.5 320.5,236.1 321.2,235.1 322.0,236.5 322.8,235.7 323.5,234.3 324.2,237.5 325.0,230.3 325.8,237.6 326.5,237.6 327.2,235.8 328.0,235.5 328.8,238.6 329.5,235.1 330.2,230.1 331.0,232.2 331.8,239.4 332.5,236.2 333.2,235.8 334.0,237.8 334.8,235.3 335.5,233.5 336.2,236.2 337.0,238.0 337.8,232.0 338.5,232.2 339.2,238.9 340.0,238.3 340.8,233.0 341.5,236.1 342.2,240.7 343.0,237.8 343.8,230.5 344.5,238.4 345.2,242.7 346.0,233.4 346.8,236.2 347.5,234.0 348.2,234.1 349.0,236.4 349.8,233.0 350.5,234.8 351.2,237.3 352.0,232.6 352.8,237.7 353.5,233.5 354.2,236.8 355.0,233.6 355.8,237.9 356.5,231.7 357.2,233.6 358.0,243.1 358.8,233.3 359.5,238.9 360.2,237.6 361.0,228.9 361.8,234.6 362.5,236.0 363.2,236.9 364.0,238.1 364.8,234.2 365.5,236.0 366.2,233.5 367.0,236.1 367.8,238.4 368.5,234.5 369.2,235.7 370.0,238.4 370.8,238.1 371.5,232.8 372.2,239.5 373.0,233.4 373.8,235.6 374.5,234.1 375.2,235.7 376.0,234.7 376.8,235.4 377.5,234.5 378.2,235.4 379.0,241.5 379.8,227.9 380.5,228.2 381.2,235.9 382.0,238.0 382.8,236.6 383.5,236.1 384.2,234.0 385.0,225.9 385.8,235.4 386.5,236.9 387.2,234.4 388.0,231.8 388.8,240.0 389.5,239.6 390.2,235.3 391.0,233.1 391.8,234.2 392.5,240.6 393.2,237.1 394.0,226.4 394.8,233.3 395.5,229.4 396.2,238.0 397.0,234.7 397.8,236.6 398.5,236.7 399.2,239.4 400.0,236.3 400.8,236.5 401.5,235.5 402.2,235.9 403.0,229.1 403.8,237.9 404.5,232.6 405.2,240.1 406.0,237.0 406.8,234.9 407.5,236.2 408.2,233.8 409.0,232.7 409.8,231.0 410.5,233.5 411.2,229.8 412.0,233.6 412.8,230.2 413.5,236.3 414.2,232.1 415.0,235.9 415.8,235.2 416.5,235.4 417.2,232.9 418.0,232.5 418.8,232.2 419.5,233.6 420.2,230.1 421.0,236.5 421.8,242.9 422.5,241.1 423.2,234.3 424.0,234.0 424.8,231.0 425.5,238.1 426.2,230.0 427.0,243.4 427.8,236.7 428.5,237.4 429.2,231.8 430.0,240.2 430.8,237.9 431.5,233.8 432.2,237.4 433.0,238.4 433.8,236.1 434.5,233.5 435.2,235.0 436.0,237.4 436.8,230.0 437.5,236.0 438.2,233.7 439.0,237.7 439.8,234.7 440.5,234.7 441.2,234.6 442.0,233.7 442.8,237.8 443.5,237.4 444.2,235.8 445.0,237.1 445.8,234.1 446.5,233.9 447.2,233.4 448.0,235.4 448.8,233.7 449.5,229.6 450.2,236.9 451.0,236.4 451.8,234.1 452.5,236.9 453.2,237.7 454.0,236.8 454.8,235.2 455.5,233.7 456.2,236.3 457.0,238.4 457.8,236.1 458.5,233.9 459.2,235.9 460.0,232.1 460.8,237.1 461.5,239.1 462.2,232.1 463.0,233.1 463.8,236.2 464.5,234.6 465.2,231.5 466.0,231.8 466.8,237.8 467.5,238.1 468.2,237.7 469.0,238.8 469.8,234.2 470.5,231.4 471.2,235.2 472.0,236.6 472.8,239.8 473.5,234.9 474.2,230.4 475.0,234.6 475.8,232.9 476.5,233.5 477.2,235.2 478.0,236.4 478.8,230.3 479.5,238.1 480.2,234.9 481.0,234.5 481.8,239.0 482.5,235.2 483.2,244.2 484.0,235.1 484.8,237.6 485.5,234.0 486.2,233.2 487.0,239.7 487.8,235.7 488.5,239.5 489.2,234.2 490.0,235.9 490.8,232.9 491.5,238.6 492.2,233.0 493.0,236.5 493.8,233.9 494.5,238.2 495.2,233.0 496.0,238.5 496.8,236.7 497.5,235.7 498.2,235.2 499.0,237.0 499.8,233.1 500.5,235.0 501.2,235.0 502.0,238.9 502.8,230.7 503.5,232.5 504.2,240.4 505.0,236.3 505.8,238.5 506.5,236.9 507.2,232.9 508.0,232.6 508.8,231.3 509.5,232.1 510.2,231.7 511.0,230.8 511.8,236.3 512.5,237.0 513.2,229.3 514.0,231.9 514.8,233.0 515.5,232.8 516.2,236.6 517.0,237.7 517.8,230.9 518.5,234.2 519.2,238.3 520.0,236.9 520.8,235.9 521.5,238.4 522.2,235.8 523.0,234.4 523.8,239.2 524.5,234.9 525.2,234.1 526.0,240.1 526.8,236.0 527.5,236.2 528.2,231.0 529.0,234.7 529.8,232.4 530.5,236.0 531.2,235.5 532.0,235.3 532.8,233.8 533.5,232.7 534.2,234.1 535.0,233.0 535.8,232.3 536.5,236.3 537.2,231.8 538.0,236.7 538.8,233.2 539.5,234.4 540.2,238.4 541.0,243.7 541.8,232.3 542.5,237.9 543.2,230.0 544.0,233.4 544.8,234.5 545.5,234.8 546.2,236.5 547.0,237.4 547.8,234.6 548.5,235.4 549.2,240.3 550.0,235.8 550.8,233.4 551.5,231.7 552.2,236.1 553.0,233.1 553.8,238.3 554.5,238.3 555.2,235.4 556.0,236.4 556.8,234.0 557.5,231.8 558.2,235.8 559.0,236.1 559.8,223.2 560.5,236.3 561.2,236.0 562.0,236.4 562.8,234.9 563.5,235.3 564.2,239.2 565.0,233.9 565.8,240.1 566.5,231.8 567.2,240.5 568.0,234.4 568.8,231.5 569.5,239.5 570.2,233.9 571.0,234.5 571.8,237.5 572.5,233.8 573.2,235.6 574.0,240.8 574.8,233.2 575.5,240.5 576.2,233.1 577.0,231.5 577.8,236.1 578.5,234.0 579.2,235.0 580.0,234.8 580.8,241.0 581.5,236.7 582.2,234.7 583.0,236.3 583.8,238.7 584.5,245.7 585.2,234.9 586.0,239.9 586.8,233.2 587.5,235.6 588.2,235.6 589.0,237.2 589.8,234.4 590.5,235.0 591.2,233.6 592.0,235.2 592.8,237.4 593.5,235.8 594.2,236.5 595.0,236.5 595.8,239.7 596.5,229.7 597.2,236.4 598.0,242.0 598.8,237.9 599.5,238.8 600.2,238.7 601.0,231.9 601.8,238.8 602.5,238.8 603.2,235.2 604.0,240.6 604.8,236.8 605.5,239.4 606.2,235.9 607.0,238.6 607.8,232.1 608.5,235.2 609.2,237.0 610.0,237.8 610.8,238.5 611.5,233.2 612.2,237.4 613.0,235.9 613.8,232.9 614.5,237.6 615.2,229.5 616.0,242.0 616.8,233.7 617.5,234.4 618.2,228.0 619.0,236.6 619.8,228.8 620.5,239.6 621.2,236.4 622.0,239.1 622.8,233.7 623.5,234.9 624.2,237.9 625.0,233.2 625.8,235.3 626.5,237.1 627.2,237.3 628.0,230.2 628.8,233.9 629.5,234.7 630.2,232.4 631.0,235.6 631.8,242.0 632.5,236.9 633.2,233.9 634.0,234.1 634.8,240.3 635.5,238.2 636.2,236.6 637.0,240.1 637.8,234.3 638.5,231.3 639.2,231.7 640.0,235.7 640.8,232.2 641.5,235.7 642.2,235.3 643.0,232.8 643.8,234.2 644.5,232.4 645.2,236.4 646.0,233.6 646.8,237.2 647.5,236.5 648.2,237.8 649.0,237.7 649.8,234.3 650.5,222.0 651.2,238.3 652.0,236.0 652.8,231.9 653.5,233.4 654.2,237.2 655.0,234.2 655.8,235.3 656.5,241.0 657.2,230.4 658.0,233.5 658.8,238.5 659.5,237.1 660.2,232.4 661.0,241.6 661.8,235.1 662.5,233.6 663.2,235.4 664.0,239.6 664.8,235.3 665.5,235.4 666.2,235.3 667.0,236.6 667.8,238.7 668.5,239.3 669.2,235.4 670.0,236.5 670.8,236.3 671.5,231.7 672.2,234.5 673.0,236.6 673.8,237.5 674.5,232.8 675.2,236.4 676.0,231.8 676.8,237.0 677.5,233.0 678.2,241.2 679.0,228.4 679.8,235.7 680.5,233.4 681.2,241.0 682.0,234.3 682.8,236.9 683.5,232.7 684.2,234.9 685.0,234.2 685.8,242.9 686.5,234.6 687.2,236.9 688.0,237.7 688.8,237.8 689.5,235.0 690.2,232.7 691.0,236.0 691.8,238.7 692.5,233.1 693.2,234.0 694.0,238.0 694.8,237.9 695.5,233.4 696.2,232.4 697.0,237.0 697.8,233.4 698.5,233.1 699.2,235.5 700.0,235.0 700.8,233.2 701.5,242.2 702.2,234.3 703.0,231.9 703.8,237.7 704.5,234.2 705.2,234.2 706.0,236.3 706.8,235.7 707.5,237.9 708.2,236.1 709.0,235.0 709.8,239.7 710.5,235.9 711.2,233.2 712.0,235.5 712.8,236.9 713.5,239.3 714.2,237.8 715.0,241.4 715.8,239.3 716.5,237.5 717.2,231.9 718.0,228.9 718.8,235.0 719.5,236.3 720.2,233.4 721.0,235.5 721.8,236.5 722.5,238.5 723.2,238.9 724.0,229.1 724.8,237.8 725.5,233.1 726.2,234.5 727.0,233.5 727.8,232.1 728.5,234.8 729.2,238.2 730.0,234.6 730.8,232.5 731.5,233.0 732.2,236.5 733.0,239.2 733.8,235.0 734.5,235.1 735.2,235.4 736.0,234.2 736.8,229.6 737.5,235.0 738.2,237.3 739.0,236.7 739.8,230.2 740.5,234.3 741.2,238.0 742.0,239.1 742.8,236.5 743.5,238.7 744.2,234.4 745.0,239.4 745.8,237.6 746.5,238.5 747.2,232.5 748.0,236.2 748.8,232.5 749.5,233.9 750.2,238.1 751.0,234.6 751.8,238.5 752.5,234.1 753.2,238.4 754.0,239.4 754.8,234.5 755.5,234.4 756.2,239.1 757.0,225.1 757.8,240.5 758.5,234.0 759.2,233.1 760.0,234.4 760.8,236.4 761.5,236.9 762.2,233.8 763.0,233.5 763.8,234.8 764.5,238.1 765.2,236.9 766.0,234.4 766.8,230.7 767.5,236.9 768.2,233.0 769.0,238.8 769.8,244.7 770.5,236.1 771.2,237.9 772.0,238.1 772.8,232.8 773.5,232.8 774.2,239.6 775.0,234.9 775.8,228.5 776.5,230.5 777.2,233.9 778.0,236.6 778.8,241.9 779.5,236.1 780.2,233.7 781.0,239.1 781.8,240.2 782.5,238.1 783.2,235.7 784.0,237.3 784.8,235.9 785.5,238.6 786.2,240.2 787.0,234.5 787.8,237.3 788.5,233.4 789.2,243.3 790.0,235.2 790.8,236.0 791.5,234.4 792.2,233.5 793.0,233.6 793.8,234.2 794.5,236.1 795.2,231.4 796.0,240.3 796.8,230.6 797.5,231.4 798.2,235.3 799.0,234.2 799.8,237.7 800.5,242.2 801.2,238.2 802.0,233.3 802.8,234.5 803.5,235.0 804.2,231.9 805.0,237.1 805.8,236.4 806.5,230.2 807.2,238.0 808.0,235.5 808.8,236.1 809.5,233.9 810.2,236.6 811.0,234.7 811.8,228.1 812.5,234.6 813.2,236.8 814.0,237.3 814.8,234.6 815.5,234.4 816.2,233.1 817.0,233.8 817.8,245.1 818.5,227.6 819.2,232.1 820.0,236.9 820.8,236.4 821.5,232.3 822.2,237.2 823.0,233.2 823.8,239.7 824.5,233.7 825.2,240.1 826.0,231.3 826.8,234.9 827.5,237.6 828.2,228.0 829.0,231.8 829.8,235.5 830.5,237.6 831.2,235.7 832.0,238.9 832.8,235.1 833.5,232.7 834.2,241.1 835.0,230.8 835.8,238.9 836.5,239.3 837.2,234.1 838.0,235.7 838.8,237.4 839.5,236.3 840.2,239.2 841.0,235.6 841.8,230.1 842.5,237.8 843.2,239.2 844.0,237.0 844.8,241.3 845.5,245.1 846.2,235.0 847.0,238.3 847.8,239.3 848.5,232.0 849.2,244.9 850.0,231.2 850.8,231.2 851.5,244.3 852.2,236.6 853.0,237.5 853.8,237.8 854.5,234.1 855.2,235.5 856.0,237.1 856.8,242.9 857.5,235.4 858.2,236.6 859.0,235.2 859.8,235.8 860.5,232.5 861.2,227.8 862.0,228.7 862.8,239.3 863.5,235.8 864.2,235.5 865.0,234.0 865.8,237.0 866.5,236.3 867.2,235.0 868.0,228.1 868.8,242.6 869.5,237.6 870.2,235.4 871.0,232.7 871.8,237.7 872.5,233.5 873.2,234.9 874.0,234.9 874.8,232.0 875.5,232.0 876.2,234.9 877.0,236.9 877.8,232.6 878.5,238.2 879.2,236.3 880.0,235.5 880.8,236.9 881.5,238.0 882.2,237.0 883.0,237.0 883.8,230.8 884.5,235.7 885.2,231.3 886.0,237.2 886.8,236.1 887.5,236.1 888.2,234.4 889.0,236.6 889.8,231.6 890.5,234.9 891.2,233.1 892.0,232.6 892.8,238.0 893.5,232.5 894.2,238.6 895.0,232.1 895.8,229.9 896.5,230.1 897.2,236.8 898.0,232.0 898.8,235.7 899.5,239.7 900.2,236.6 901.0,235.7 901.8,236.6 902.5,234.6 903.2,235.1 904.0,234.4 904.8,232.7 905.5,244.1 906.2,237.6 907.0,234.6 907.8,237.6 908.5,237.8 909.2,236.3 910.0,235.8 910.8,236.4 911.5,233.1 912.2,234.1 913.0,237.9 913.8,236.3 914.5,234.7 915.2,240.6 916.0,229.0 916.8,237.4 917.5,234.9 918.2,234.8 919.0,238.8 919.8,233.8 920.5,234.9 921.2,237.4 922.0,236.5 922.8,236.3 923.5,235.2 924.2,241.8 925.0,240.8 925.8,236.9 926.5,233.9 927.2,234.9 928.0,242.5 928.8,227.8 929.5,234.3 930.2,235.1 931.0,239.6 931.8,239.1 932.5,233.1 933.2,235.1 934.0,238.3 934.8,237.3 935.5,237.0 936.2,237.3 937.0,239.3 937.8,236.3 938.5,238.0 939.2,236.3 940.0,236.1 940.8,233.1 941.5,241.5 942.2,231.7 943.0,238.1 943.8,238.3 944.5,238.8 945.2,241.5 946.0,236.3 946.8,236.5 947.5,237.9 948.2,237.7 949.0,236.5 949.8,238.3 950.5,226.1 951.2,235.4 952.0,234.7" fill="none" stroke="#f4f4f4" stroke-width="0.7"/><rect x="136" y="290.6" width="816" height="0.9" fill="#555"/><rect x="153.60" y="291" width="0.8" height="2.5" fill="#666"/><rect x="209.40" y="291" width="0.8" height="2.5" fill="#666"/><rect x="265.20" y="291" width="0.8" height="2.5" fill="#666"/><rect x="321.00" y="291" width="0.8" height="2.5" fill="#666"/><rect x="376.80" y="291" width="0.8" height="2.5" fill="#666"/><rect x="432.60" y="291" width="0.8" height="2.5" fill="#666"/><rect x="488.40" y="291" width="0.8" height="2.5" fill="#666"/><rect x="544.20" y="291" width="0.8" height="2.5" fill="#666"/><rect x="600.00" y="291" width="0.8" height="2.5" fill="#666"/><rect x="655.80" y="291" width="0.8" height="2.5" fill="#666"/><rect x="711.60" y="291" width="0.8" height="2.5" fill="#666"/><rect x="767.40" y="291" width="0.8" height="2.5" fill="#666"/><rect x="823.20" y="291" width="0.8" height="2.5" fill="#666"/><rect x="879.00" y="291" width="0.8" height="2.5" fill="#666"/><rect x="934.80" y="291" width="0.8" height="2.5" fill="#666"/></svg>
<div class="a" style="left:956.6px;top:59px;width:5.899999999999977px;height:232px;background:#3a3a3a"></div>
<div class="a" style="left:956.6px;top:283px;width:5.399999999999977px;height:8px;background:#0a0a7a"></div>
<div class="t" style="left:957.3px;top:277.79px;font-size:5.2px;color:#ccc;">3</div>
<div class="t" style="left:94.0px;width:120px;text-align:center;top:296.55px;font-size:5.5px;color:#c4c8d0;"></div>
<div class="t" style="left:149.8px;width:120px;text-align:center;top:296.55px;font-size:5.5px;color:#c4c8d0;"></div>
<div class="t" style="left:205.60000000000002px;width:120px;text-align:center;top:296.55px;font-size:5.5px;color:#c4c8d0;"></div>
<div class="t" style="left:261.4px;width:120px;text-align:center;top:296.55px;font-size:5.5px;color:#c4c8d0;"></div>
<div class="t" style="left:317.2px;width:120px;text-align:center;top:296.55px;font-size:5.5px;color:#c4c8d0;"></div>
<div class="t" style="left:373.0px;width:120px;text-align:center;top:296.55px;font-size:5.5px;color:#c4c8d0;"></div>
<div class="t" style="left:428.79999999999995px;width:120px;text-align:center;top:296.55px;font-size:5.5px;color:#c4c8d0;"></div>
<div class="t" style="left:484.6px;width:120px;text-align:center;top:296.55px;font-size:5.5px;color:#c4c8d0;">467.000 M</div>
<div class="t" style="left:540.4px;width:120px;text-align:center;top:296.55px;font-size:5.5px;color:#c4c8d0;">467.100 M</div>
<div class="t" style="left:596.1999999999999px;width:120px;text-align:center;top:296.55px;font-size:5.5px;color:#c4c8d0;">467.200 M</div>
<div class="t" style="left:652.0px;width:120px;text-align:center;top:296.55px;font-size:5.5px;color:#c4c8d0;">467.300 M</div>
<div class="t" style="left:707.8px;width:120px;text-align:center;top:296.55px;font-size:5.5px;color:#c4c8d0;">467.400 M</div>
<div class="t" style="left:763.5999999999999px;width:120px;text-align:center;top:296.55px;font-size:5.5px;color:#c4c8d0;">467.500 M</div>
<div class="t" style="left:819.4px;width:120px;text-align:center;top:296.55px;font-size:5.5px;color:#c4c8d0;">467.600 M</div>
<div class="t" style="left:875.1999999999999px;width:120px;text-align:center;top:296.55px;font-size:5.5px;color:#c4c8d0;">467.700 M</div>
<div class="a" style="left:135px;top:306.6px;width:832.3px;height:2.1999999999999886px;background:#e8e8e8"></div>
<div class="a" style="left:135px;top:308.8px;width:832.3px;height:223.7px;background:#000"></div>
<div class="a" style="left:149px;top:308.8px;width:802.8px;height:223.7px;background:#03031e"></div>
<div class="a" style="left:956.6px;top:314.6px;width:5.399999999999977px;height:209.79999999999995px;background:linear-gradient(#500000,#900000 12%,#d00000 30%,#ff3000 42%,#ffa000 50%,#ffff30 56%,#ffffff 63%,#60b0ff 69%,#1050e0 76%,#0000a0 85%,#000060 94%,#000030)"></div>
<div class="t" style="left:973.6px;top:46.46px;font-size:5.9px;color:#222;">Zoom</div>
<div class="t" style="left:970px;top:167.16px;font-size:5.9px;color:#222;">Contrast</div>
<div class="t" style="left:972px;top:289.16px;font-size:5.9px;color:#222;">Range</div>
<div class="t" style="left:973px;top:410.96px;font-size:5.9px;color:#222;">Offset</div>
<div class="a" style="left:978.6px;top:57.4px;width:3.199999999999932px;height:102.6px;background:#dcdcdc;border-left:0.6px solid #d0d0d0;border-right:0.6px solid #e6e6e6"></div>
<div class="a" style="left:972.5px;top:60.4px;width:2.0px;height:0.6000000000000014px;background:#d4d4d4"></div>
<div class="a" style="left:986px;top:60.4px;width:2px;height:0.6000000000000014px;background:#d4d4d4"></div>
<div class="a" style="left:972.5px;top:69.86px;width:2.0px;height:0.5999999999999943px;background:#d4d4d4"></div>
<div class="a" style="left:986px;top:69.86px;width:2px;height:0.5999999999999943px;background:#d4d4d4"></div>
<div class="a" style="left:972.5px;top:79.32px;width:2.0px;height:0.5999999999999943px;background:#d4d4d4"></div>
<div class="a" style="left:986px;top:79.32px;width:2px;height:0.5999999999999943px;background:#d4d4d4"></div>
<div class="a" style="left:972.5px;top:88.78px;width:2.0px;height:0.5999999999999943px;background:#d4d4d4"></div>
<div class="a" style="left:986px;top:88.78px;width:2px;height:0.5999999999999943px;background:#d4d4d4"></div>
<div class="a" style="left:972.5px;top:98.24px;width:2.0px;height:0.5999999999999943px;background:#d4d4d4"></div>
<div class="a" style="left:986px;top:98.24px;width:2px;height:0.5999999999999943px;background:#d4d4d4"></div>
<div class="a" style="left:972.5px;top:107.69999999999999px;width:2.0px;height:0.5999999999999943px;background:#d4d4d4"></div>
<div class="a" style="left:986px;top:107.69999999999999px;width:2px;height:0.5999999999999943px;background:#d4d4d4"></div>
<div class="a" style="left:972.5px;top:117.16px;width:2.0px;height:0.5999999999999943px;background:#d4d4d4"></div>
<div class="a" style="left:986px;top:117.16px;width:2px;height:0.5999999999999943px;background:#d4d4d4"></div>
<div class="a" style="left:972.5px;top:126.62px;width:2.0px;height:0.5999999999999943px;background:#d4d4d4"></div>
<div class="a" style="left:986px;top:126.62px;width:2px;height:0.5999999999999943px;background:#d4d4d4"></div>
<div class="a" style="left:972.5px;top:136.07999999999998px;width:2.0px;height:0.5999999999999943px;background:#d4d4d4"></div>
<div class="a" style="left:986px;top:136.07999999999998px;width:2px;height:0.5999999999999943px;background:#d4d4d4"></div>
<div class="a" style="left:972.5px;top:145.54px;width:2.0px;height:0.5999999999999943px;background:#d4d4d4"></div>
<div class="a" style="left:986px;top:145.54px;width:2px;height:0.5999999999999943px;background:#d4d4d4"></div>
<div class="a" style="left:972.5px;top:155.0px;width:2.0px;height:0.5999999999999943px;background:#d4d4d4"></div>
<div class="a" style="left:986px;top:155.0px;width:2px;height:0.5999999999999943px;background:#d4d4d4"></div>
<div class="a" style="left:974.3px;top:153.2px;width:11.200000000000045px;height:5.600000000000023px;background:#0a72d8;border-radius:0.6px"></div>
<div class="a" style="left:978.6px;top:179px;width:3.199999999999932px;height:102px;background:#dcdcdc;border-left:0.6px solid #d0d0d0;border-right:0.6px solid #e6e6e6"></div>
<div class="a" style="left:972.5px;top:182.0px;width:2.0px;height:0.5999999999999943px;background:#d4d4d4"></div>
<div class="a" style="left:986px;top:182.0px;width:2px;height:0.5999999999999943px;background:#d4d4d4"></div>
<div class="a" style="left:972.5px;top:191.4px;width:2.0px;height:0.5999999999999943px;background:#d4d4d4"></div>
<div class="a" style="left:986px;top:191.4px;width:2px;height:0.5999999999999943px;background:#d4d4d4"></div>
<div class="a" style="left:972.5px;top:200.8px;width:2.0px;height:0.5999999999999943px;background:#d4d4d4"></div>
<div class="a" style="left:986px;top:200.8px;width:2px;height:0.5999999999999943px;background:#d4d4d4"></div>
<div class="a" style="left:972.5px;top:210.2px;width:2.0px;height:0.5999999999999943px;background:#d4d4d4"></div>
<div class="a" style="left:986px;top:210.2px;width:2px;height:0.5999999999999943px;background:#d4d4d4"></div>
<div class="a" style="left:972.5px;top:219.6px;width:2.0px;height:0.5999999999999943px;background:#d4d4d4"></div>
<div class="a" style="left:986px;top:219.6px;width:2px;height:0.5999999999999943px;background:#d4d4d4"></div>
<div class="a" style="left:972.5px;top:229.0px;width:2.0px;height:0.5999999999999943px;background:#d4d4d4"></div>
<div class="a" style="left:986px;top:229.0px;width:2px;height:0.5999999999999943px;background:#d4d4d4"></div>
<div class="a" style="left:972.5px;top:238.4px;width:2.0px;height:0.5999999999999943px;background:#d4d4d4"></div>
<div class="a" style="left:986px;top:238.4px;width:2px;height:0.5999999999999943px;background:#d4d4d4"></div>
<div class="a" style="left:972.5px;top:247.8px;width:2.0px;height:0.5999999999999943px;background:#d4d4d4"></div>
<div class="a" style="left:986px;top:247.8px;width:2px;height:0.5999999999999943px;background:#d4d4d4"></div>
<div class="a" style="left:972.5px;top:257.2px;width:2.0px;height:0.6000000000000227px;background:#d4d4d4"></div>
<div class="a" style="left:986px;top:257.2px;width:2px;height:0.6000000000000227px;background:#d4d4d4"></div>
<div class="a" style="left:972.5px;top:266.6px;width:2.0px;height:0.6000000000000227px;background:#d4d4d4"></div>
<div class="a" style="left:986px;top:266.6px;width:2px;height:0.6000000000000227px;background:#d4d4d4"></div>
<div class="a" style="left:972.5px;top:276.0px;width:2.0px;height:0.6000000000000227px;background:#d4d4d4"></div>
<div class="a" style="left:986px;top:276.0px;width:2px;height:0.6000000000000227px;background:#d4d4d4"></div>
<div class="a" style="left:974.3px;top:257.0px;width:11.200000000000045px;height:5.600000000000023px;background:#0a72d8;border-radius:0.6px"></div>
<div class="a" style="left:978.6px;top:301px;width:3.199999999999932px;height:103px;background:#dcdcdc;border-left:0.6px solid #d0d0d0;border-right:0.6px solid #e6e6e6"></div>
<div class="a" style="left:972.5px;top:304.0px;width:2.0px;height:0.6000000000000227px;background:#d4d4d4"></div>
<div class="a" style="left:986px;top:304.0px;width:2px;height:0.6000000000000227px;background:#d4d4d4"></div>
<div class="a" style="left:972.5px;top:313.5px;width:2.0px;height:0.6000000000000227px;background:#d4d4d4"></div>
<div class="a" style="left:986px;top:313.5px;width:2px;height:0.6000000000000227px;background:#d4d4d4"></div>
<div class="a" style="left:972.5px;top:323.0px;width:2.0px;height:0.6000000000000227px;background:#d4d4d4"></div>
<div class="a" style="left:986px;top:323.0px;width:2px;height:0.6000000000000227px;background:#d4d4d4"></div>
<div class="a" style="left:972.5px;top:332.5px;width:2.0px;height:0.6000000000000227px;background:#d4d4d4"></div>
<div class="a" style="left:986px;top:332.5px;width:2px;height:0.6000000000000227px;background:#d4d4d4"></div>
<div class="a" style="left:972.5px;top:342.0px;width:2.0px;height:0.6000000000000227px;background:#d4d4d4"></div>
<div class="a" style="left:986px;top:342.0px;width:2px;height:0.6000000000000227px;background:#d4d4d4"></div>
<div class="a" style="left:972.5px;top:351.5px;width:2.0px;height:0.6000000000000227px;background:#d4d4d4"></div>
<div class="a" style="left:986px;top:351.5px;width:2px;height:0.6000000000000227px;background:#d4d4d4"></div>
<div class="a" style="left:972.5px;top:361.0px;width:2.0px;height:0.6000000000000227px;background:#d4d4d4"></div>
<div class="a" style="left:986px;top:361.0px;width:2px;height:0.6000000000000227px;background:#d4d4d4"></div>
<div class="a" style="left:972.5px;top:370.5px;width:2.0px;height:0.6000000000000227px;background:#d4d4d4"></div>
<div class="a" style="left:986px;top:370.5px;width:2px;height:0.6000000000000227px;background:#d4d4d4"></div>
<div class="a" style="left:972.5px;top:380.0px;width:2.0px;height:0.6000000000000227px;background:#d4d4d4"></div>
<div class="a" style="left:986px;top:380.0px;width:2px;height:0.6000000000000227px;background:#d4d4d4"></div>
<div class="a" style="left:972.5px;top:389.5px;width:2.0px;height:0.6000000000000227px;background:#d4d4d4"></div>
<div class="a" style="left:986px;top:389.5px;width:2px;height:0.6000000000000227px;background:#d4d4d4"></div>
<div class="a" style="left:972.5px;top:399.0px;width:2.0px;height:0.6000000000000227px;background:#d4d4d4"></div>
<div class="a" style="left:986px;top:399.0px;width:2px;height:0.6000000000000227px;background:#d4d4d4"></div>
<div class="a" style="left:974.3px;top:355.4px;width:11.200000000000045px;height:5.600000000000023px;background:#0a72d8;border-radius:0.6px"></div>
<div class="a" style="left:978.6px;top:423.7px;width:3.199999999999932px;height:101.30000000000001px;background:#dcdcdc;border-left:0.6px solid #d0d0d0;border-right:0.6px solid #e6e6e6"></div>
<div class="a" style="left:972.5px;top:426.7px;width:2.0px;height:0.6000000000000227px;background:#d4d4d4"></div>
<div class="a" style="left:986px;top:426.7px;width:2px;height:0.6000000000000227px;background:#d4d4d4"></div>
<div class="a" style="left:972.5px;top:436.03px;width:2.0px;height:0.6000000000000227px;background:#d4d4d4"></div>
<div class="a" style="left:986px;top:436.03px;width:2px;height:0.6000000000000227px;background:#d4d4d4"></div>
<div class="a" style="left:972.5px;top:445.36px;width:2.0px;height:0.6000000000000227px;background:#d4d4d4"></div>
<div class="a" style="left:986px;top:445.36px;width:2px;height:0.6000000000000227px;background:#d4d4d4"></div>
<div class="a" style="left:972.5px;top:454.69px;width:2.0px;height:0.6000000000000227px;background:#d4d4d4"></div>
<div class="a" style="left:986px;top:454.69px;width:2px;height:0.6000000000000227px;background:#d4d4d4"></div>
<div class="a" style="left:972.5px;top:464.02px;width:2.0px;height:0.6000000000000227px;background:#d4d4d4"></div>
<div class="a" style="left:986px;top:464.02px;width:2px;height:0.6000000000000227px;background:#d4d4d4"></div>
<div class="a" style="left:972.5px;top:473.35px;width:2.0px;height:0.6000000000000227px;background:#d4d4d4"></div>
<div class="a" style="left:986px;top:473.35px;width:2px;height:0.6000000000000227px;background:#d4d4d4"></div>
<div class="a" style="left:972.5px;top:482.68px;width:2.0px;height:0.6000000000000227px;background:#d4d4d4"></div>
<div class="a" style="left:986px;top:482.68px;width:2px;height:0.6000000000000227px;background:#d4d4d4"></div>
<div class="a" style="left:972.5px;top:492.01px;width:2.0px;height:0.6000000000000227px;background:#d4d4d4"></div>
<div class="a" style="left:986px;top:492.01px;width:2px;height:0.6000000000000227px;background:#d4d4d4"></div>
<div class="a" style="left:972.5px;top:501.34000000000003px;width:2.0px;height:0.6000000000000227px;background:#d4d4d4"></div>
<div class="a" style="left:986px;top:501.34000000000003px;width:2px;height:0.6000000000000227px;background:#d4d4d4"></div>
<div class="a" style="left:972.5px;top:510.66999999999996px;width:2.0px;height:0.6000000000000227px;background:#d4d4d4"></div>
<div class="a" style="left:986px;top:510.66999999999996px;width:2px;height:0.6000000000000227px;background:#d4d4d4"></div>
<div class="a" style="left:972.5px;top:520.0px;width:2.0px;height:0.6000000000000227px;background:#d4d4d4"></div>
<div class="a" style="left:986px;top:520.0px;width:2px;height:0.6000000000000227px;background:#d4d4d4"></div>
<div class="a" style="left:974.3px;top:520.8000000000001px;width:11.200000000000045px;height:5.599999999999909px;background:#0a72d8;border-radius:0.6px"></div>
<div class="t" style="left:939px;top:28.3px;font-family:'Liberation Serif',serif;font-weight:bold;font-size:10.2px;color:#fff;text-shadow:0 0 1.2px #000,0 0 2.5px #222,0.5px 0.5px 2px #000;letter-spacing:-0.2px;transform:scaleX(1.05);transform-origin:left">AIRSPY</div>
<svg class="a" style="left:970px;top:19px" width="18" height="16"><g stroke="#fff" stroke-width="1.1" fill="none" style="filter:drop-shadow(0 0 1px #000)"><path d="M8 14A5 5 0 0 0 4 9"/><path d="M11 13.5A8 8 0 0 0 4.5 6"/><path d="M14 13A11 11 0 0 0 5 3"/></g></svg>
<div class="a" style="left:94px;top:18px;width:494px;height:495px;background:#f0f0f0;border-radius:4px;box-shadow:0 2px 10px rgba(0,0,0,0.35),0 0 1px rgba(0,0,0,0.4);overflow:hidden">
<div class="a" style="left:0;top:0;width:494px;height:15px;background:#f1f0f6"></div>
<div class="a" style="left:0;top:15px;width:494px;height:10px;background:#fff"></div>
</div>
<svg class="a" style="left:99px;top:21px" width="7" height="9" viewBox="0 0 7 9"><path d="M1.2 8.6C0.6 6 2 2.5 5.6 0.4C6 2.8 4.8 6 1.2 8.6z" fill="#2a5fb8"/><path d="M1.2 8.6C2 6 3.5 3.5 5.6 0.4C5.2 3 3.6 6.2 1.2 8.6z" fill="#111"/></svg>
<div class="t" style="left:110px;top:23.06px;font-size:6.1px;color:#1a1a1a;">Soft Repeater Box v1.01 - by NHscan</div>
<div class="a" style="left:527px;top:25.6px;width:5.5px;height:0.5999999999999979px;background:#555"></div>
<div class="a" style="left:550.5px;top:22.8px;width:5.0px;height:5.599999999999998px;border:0.7px solid #333;border-radius:1.2px"></div>
<svg class="a" style="left:573px;top:22.5px" width="6" height="6"><path d="M0.3 0.3L5.7 5.7M5.7 0.3L0.3 5.7" stroke="#333" stroke-width="0.65"/></svg>
<div class="t" style="left:97.5px;top:36.30px;font-size:5.8px;color:#222;">File</div>
<div class="a" style="left:276px;top:47px;width:54px;height:12px;background:#fbfbfb;border:0.7px solid #e2e2e2;border-bottom:none"></div>
<div class="t" style="left:99.7px;top:51.46px;font-size:6.1px;color:#222;width:35.89999999999999px">Main Control</div>
<div class="t" style="left:140px;top:51.46px;font-size:6.1px;color:#222;width:39px">Audio Devices</div>
<div class="t" style="left:182.5px;top:51.46px;font-size:6.1px;color:#222;width:48.5px">Repeater Settings</div>
<div class="t" style="left:234.5px;top:51.46px;font-size:6.1px;color:#222;width:40.0px">Mode Settings</div>
<div class="t" style="left:278px;top:50.06px;font-size:6.1px;color:#222;width:49.5px">VOX/PTT Settings</div>
<div class="t" style="left:332px;top:51.46px;font-size:6.1px;color:#222;width:30px">Recordings</div>
<div class="t" style="left:366.5px;top:51.46px;font-size:6.1px;color:#222;width:50.5px">DTMF Commands</div>
<div class="a" style="left:138px;top:48px;width:0.6999999999999886px;height:11px;background:#e4e4e4"></div>
<div class="a" style="left:181px;top:48px;width:0.6999999999999886px;height:11px;background:#e4e4e4"></div>
<div class="a" style="left:232.7px;top:48px;width:0.6999999999999886px;height:11px;background:#e4e4e4"></div>
<div class="a" style="left:364.5px;top:48px;width:0.6999999999999886px;height:11px;background:#e4e4e4"></div>
<div class="a" style="left:419px;top:48px;width:0.6999999999999886px;height:11px;background:#e4e4e4"></div>
<div class="a" style="left:97px;top:59px;width:1.2000000000000028px;height:449px;background:#686868"></div>
<div class="a" style="left:397px;top:58.8px;width:178.5px;height:1.2000000000000028px;background:#686868"></div>
<div class="a" style="left:574.5px;top:59px;width:1.2000000000000455px;height:449.5px;background:#686868"></div>
<div class="a" style="left:397px;top:507.5px;width:178.5px;height:1.1999999999999886px;background:#686868"></div>
<div class="a" style="left:579.3px;top:68px;width:1.2000000000000455px;height:373px;background:#777"></div>
<div class="a" style="left:584px;top:59px;width:0.7000000000000455px;height:449px;background:#e6e6e6"></div>
<div class="a" style="left:103.7px;top:68.5px;width:287.90000000000003px;height:110.0px;border:0.8px solid #dedede;border-radius:1px"></div>
<div class="a" style="left:105.5px;top:66.5px;width:40.0px;height:4.0px;background:#f0f0f0"></div>
<div class="t" style="left:107px;top:65.36px;font-size:6.1px;color:#333;">VOX Settings</div>
<svg class="a" style="left:110.5px;top:83px" width="8" height="6.5" viewBox="0 0 16 13"><path d="M8 1.2L15 12.2H1z" fill="none" stroke="#1c1cf0" stroke-width="1.3" stroke-linejoin="round"/><path d="M8 5V8.3M8 9.5V10.9" stroke="#1c1cf0" stroke-width="1.3"/></svg>
<div class="t" style="left:120.8px;top:83.06px;font-size:6.1px;color:#1c1cf0;">For Repeater Mode: Only enable if detecting INCOMING audio to repeat.</div>
<div class="t" style="left:110.5px;top:90.46px;font-size:6.1px;color:#1c1cf0;">If using radio's VOX for output, keep this DISABLED.</div>
<div class="a" style="left:110.5px;top:105.95px;width:6.7px;height:6.7px;border-radius:1.2px;background:#0b5fc5"><svg class="a" style="left:0;top:0" width="6.7" height="6.7" viewBox="0 0 10 10"><path d="M2.5 5.2L4.3 7L7.6 3.3" stroke="#fff" stroke-width="0.9" fill="none"/></svg></div>
<div class="a" style="left:119.3px;top:104.5px;width:86.7px;height:9.5px;border:0.6px dashed #9a9a9a"></div>
<div class="t" style="left:120px;top:106.36px;font-size:6.1px;color:#1a1a1a;">Enable Software VOX Detection</div>
<div class="t" style="left:113px;top:123.56px;font-size:6.1px;color:#222;">VOX Threshold:</div>
<div class="a" style="left:162.5px;top:125.9px;width:103.5px;height:1.1999999999999886px;background:#dcdcdc"></div>
<div class="a" style="left:174.9px;top:120.7px;width:6.0px;height:11.600000000000009px;background:#0a6fd6;border-radius:0.8px"></div>
<div class="t" style="left:272px;top:123.56px;font-size:6.1px;color:#222;">3.6%</div>
<div class="t" style="left:113px;top:142.46px;font-size:6.1px;color:#222;">Attack Time:</div>
<div class="a" style="left:155px;top:144.8px;width:102px;height:1.1999999999999886px;background:#dcdcdc"></div>
<div class="a" style="left:158.9px;top:139.6px;width:6.0px;height:11.600000000000023px;background:#0a6fd6;border-radius:0.8px"></div>
<div class="t" style="left:264.7px;top:142.46px;font-size:6.1px;color:#222;">0.10s</div>
<div class="t" style="left:113px;top:161.06px;font-size:6.1px;color:#222;">Release Time:</div>
<div class="a" style="left:157.5px;top:163.4px;width:102.5px;height:1.1999999999999886px;background:#dcdcdc"></div>
<div class="a" style="left:162.9px;top:158.2px;width:6.0px;height:11.600000000000023px;background:#0a6fd6;border-radius:0.8px"></div>
<div class="t" style="left:267px;top:161.06px;font-size:6.1px;color:#222;">0.27s</div>
<div class="a" style="left:103.4px;top:194.5px;width:288.29999999999995px;height:119.10000000000002px;border:0.8px solid #dedede;border-radius:1px"></div>
<div class="a" style="left:105.5px;top:192.5px;width:134.0px;height:4.0px;background:#f0f0f0"></div>
<div class="a" style="left:108px;top:191.5px;width:5px;height:5px;border:0.6px solid #777;background:#fafafa"><div class="a" style="left:0.8px;top:1.7px;width:2.2px;height:0.6px;background:#555"></div></div>
<div class="t" style="left:115px;top:191.46px;font-size:6.1px;color:#333;">Feedback Protection (Web SDR / Stereo Mix)</div>
<div class="t" style="left:110.6px;top:209.11px;font-size:6.0px;color:#1c7c22;font-weight:bold;">Prevents feedback loops when using web-based SDR (OpenWebRX) or Stereo Mix.</div>
<div class="t" style="left:110.6px;top:216.71px;font-size:6.0px;color:#1c7c22;font-weight:bold;">Mutes input after transmission to avoid capturing own output.</div>
<svg class="a" style="left:110.5px;top:224px" width="8" height="6.5" viewBox="0 0 16 13"><path d="M8 1.2L15 12.2H1z" fill="none" stroke="#1c7c22" stroke-width="1.7" stroke-linejoin="round"/><path d="M8 5V8.3M8 9.5V10.9" stroke="#1c7c22" stroke-width="1.5"/></svg>
<div class="t" style="left:120px;top:224.51px;font-size:6.0px;color:#1c7c22;font-weight:bold;">ENABLE THIS if you're getting audio feedback loops!</div>
<div class="a" style="left:110.5px;top:240.05px;width:6.7px;height:6.7px;border-radius:1.2px;background:#0b5fc5"><svg class="a" style="left:0;top:0" width="6.7" height="6.7" viewBox="0 0 10 10"><path d="M2.5 5.2L4.3 7L7.6 3.3" stroke="#fff" stroke-width="0.9" fill="none"/></svg></div>
<div class="t" style="left:119.5px;top:240.46px;font-size:6.1px;color:#1a1a1a;">&#10003; Enable Feedback Protection (RECOMMENDED for Web SDR)</div>
<div class="t" style="left:113px;top:256.66px;font-size:6.1px;color:#222;">Holdoff Time (mute input after output):</div>
<div class="a" style="left:114.5px;top:270.4px;width:156.2px;height:1.2000000000000455px;background:#dcdcdc"></div>
<div class="a" style="left:150.8px;top:265px;width:6.099999999999994px;height:12.600000000000023px;background:#0a6fd6;border-radius:0.8px"></div>
<div class="t" style="left:276.7px;top:268.06px;font-size:6.1px;color:#222;">1.6s</div>
<div class="t" style="left:114px;top:284.80px;font-size:5.6px;color:#a8a8a8;">&#9833; Lower = faster response but may allow feedback&nbsp; |&nbsp; Higher = prevents feedback but adds delay</div>
<div class="t" style="left:116px;top:298.66px;font-size:6.1px;color:#222;">Status:</div>
<div class="t" style="left:139px;top:298.66px;font-size:6.1px;color:#1c7c22;">&#9679; Active</div>
<div class="a" style="left:103.4px;top:329.5px;width:288.29999999999995px;height:129.7px;border:0.8px solid #dedede;border-radius:1px"></div>
<div class="a" style="left:105.5px;top:327.5px;width:41.0px;height:4.0px;background:#f0f0f0"></div>
<div class="t" style="left:107px;top:326.46px;font-size:6.1px;color:#333;">PTT Control</div>
<div class="t" style="left:110.6px;top:343.63px;font-size:7.0px;color:#222;font-weight:bold;">PTT Mode:</div>
<svg class="a" style="left:110.2px;top:358.0px" width="7" height="7"><circle cx="3.5" cy="3.5" r="3.5" fill="#0a5fc8"/><circle cx="3.5" cy="3.5" r="1.5" fill="#fff"/></svg>
<div class="t" style="left:120px;top:358.56px;font-size:6.1px;color:#222;">VOX (Radio handles PTT via audio)</div>
<svg class="a" style="left:110.2px;top:371.0px" width="7" height="7"><circle cx="3.5" cy="3.5" r="3.05" fill="#f8f8f8" stroke="#8a8a8a" stroke-width="0.7"/></svg>
<div class="t" style="left:120px;top:371.56px;font-size:6.1px;color:#222;">USB/Serial (Software controls PTT)</div>
<div class="t" style="left:113px;top:390.06px;font-size:6.1px;color:#222;">Serial Port:</div>
<div class="a" style="left:148.5px;top:387.7px;width:74.5px;height:10.800000000000011px;background:#fff;border:0.8px solid #9a9a9a;border-radius:1px"></div>
<div class="t" style="left:150.5px;top:390.26px;font-size:6.1px;color:#111;">COM3</div>
<svg class="a" style="left:215px;top:391.5px" width="5" height="3"><path d="M0.3 0.3L2.5 2.5L4.7 0.3" stroke="#555" stroke-width="0.6" fill="none"/></svg>
<div class="a" style="left:228.6px;top:388px;width:38.400000000000006px;height:10.5px;background:#fdfdfd;border:0.7px solid #dcdcdc;border-radius:1.5px"></div>
<div class="t" style="left:228.6px;width:38.400000000000006px;text-align:center;top:390.31px;font-size:6.1px;color:#1a1a1a">Refresh</div>
<div class="a" style="left:273.7px;top:388px;width:38.10000000000002px;height:10.5px;background:#fdfdfd;border:0.7px solid #dcdcdc;border-radius:1.5px"></div>
<div class="t" style="left:273.7px;width:38.10000000000002px;text-align:center;top:390.31px;font-size:6.1px;color:#1a1a1a">Connect</div>
<svg class="a" style="left:110.6px;top:409.9px" width="6" height="6"><circle cx="2.9" cy="2.9" r="2.4" fill="none" stroke="#333" stroke-width="0.65"/></svg>
<div class="t" style="left:117px;top:409.66px;font-size:6.1px;color:#222;">Not connected</div>
<div class="t" style="left:113px;top:425.26px;font-size:6.1px;color:#222;font-weight:bold;">Relay Type:</div>
<svg class="a" style="left:153.5px;top:424.7px" width="7" height="7"><circle cx="3.5" cy="3.5" r="3.5" fill="#0a5fc8"/><circle cx="3.5" cy="3.5" r="1.5" fill="#fff"/></svg>
<div class="t" style="left:163px;top:425.26px;font-size:6.1px;color:#222;">Command-based (x003qjjrql, Chinese modules)</div>
<svg class="a" style="left:302px;top:424.7px" width="7" height="7"><circle cx="3.5" cy="3.5" r="3.05" fill="#f8f8f8" stroke="#8a8a8a" stroke-width="0.7"/></svg>
<div class="t" style="left:311.5px;top:425.26px;font-size:6.1px;color:#222;">RTS/DTR (Standard serial)</div>
<div class="a" style="left:113px;top:439.6px;width:38.5px;height:11.099999999999966px;background:#fdfdfd;border:0.7px solid #dcdcdc;border-radius:1.5px"></div>
<div class="t" style="left:113px;width:38.5px;text-align:center;top:442.21px;font-size:6.1px;color:#1a1a1a">Test PTT ON</div>
<div class="a" style="left:158px;top:439.6px;width:40px;height:11.099999999999966px;background:#fdfdfd;border:0.7px solid #dcdcdc;border-radius:1.5px"></div>
<div class="t" style="left:158px;width:40px;text-align:center;top:442.21px;font-size:6.1px;color:#1a1a1a">Test PTT OFF</div>
<div class="t" style="left:104px;top:475.37px;font-size:6.9px;color:#222;font-weight:bold;">Audio Troubleshooting:</div>
<div class="a" style="left:104px;top:490.2px;width:58.80000000000001px;height:10.800000000000011px;background:#fdfdfd;border:0.7px solid #dcdcdc;border-radius:1.5px"></div>
<div class="t" style="left:104px;width:58.80000000000001px;text-align:center;top:492.78px;font-size:5.85px;color:#1a1a1a">Show Audio Devices</div>
<div class="a" style="left:0px;top:537.4px;width:1000px;height:25.600000000000023px;background:#1c2028"></div>
<div class="a" style="left:0px;top:537.2px;width:1000px;height:0.599999999999909px;background:#262a32"></div>
<svg class="a" style="left:0;top:537.3px" width="1000" height="26"><defs><linearGradient id="wg" x1="0" y1="0" x2="1" y2="1"><stop offset="0" stop-color="#6fd8fb"/><stop offset="1" stop-color="#1b8fdc"/></linearGradient></defs><rect x="10.8" y="7.8" width="5.8" height="5.8" fill="url(#wg)" rx="0.4"/><rect x="17" y="7.8" width="5.8" height="5.8" fill="url(#wg)" rx="0.4"/><rect x="10.8" y="14" width="5.8" height="5.8" fill="url(#wg)" rx="0.4"/><rect x="17" y="14" width="5.8" height="5.8" fill="url(#wg)" rx="0.4"/><rect x="33.6" y="10" width="8.5" height="9" fill="#6a6e74" rx="0.8"/><rect x="37.5" y="7.5" width="9.3" height="8.5" fill="#f2f2f2" rx="0.8"/><circle cx="63" cy="13.8" r="6.4" fill="#34a853"/><path d="M63 13.8L57.5 10.6A6.4 6.4 0 0 1 68.5 10.6z" fill="#ea4335"/><path d="M63 13.8L68.5 10.6A6.4 6.4 0 0 1 66.2 19.3z" fill="#fbbc05"/><circle cx="63" cy="13.8" r="2.9" fill="#fff"/><circle cx="63" cy="13.8" r="2.2" fill="#4285f4"/><circle cx="68" cy="8.5" r="3.8" fill="#7a0a0a"/><circle cx="68" cy="8.5" r="2.6" fill="#b01010"/><rect x="61.9" y="21.7" width="1.8" height="1" fill="#999" rx="0.5"/><path d="M82.5 10.5V8.2Q82.5 6 86 6Q89.6 6 89.6 8.2V10.5" stroke="#3ab0e8" stroke-width="1" fill="none"/><rect x="79.8" y="9.5" width="12.6" height="10" fill="#f0f0f0" rx="1.2"/><rect x="83.3" y="11.8" width="2.4" height="2.4" fill="#f25022"/><rect x="86.3" y="11.8" width="2.4" height="2.4" fill="#7fba00"/><rect x="83.3" y="14.8" width="2.4" height="2.4" fill="#00a4ef"/><rect x="86.3" y="14.8" width="2.4" height="2.4" fill="#ffb900"/><rect x="102" y="8" width="13.2" height="10.5" fill="#2a8fd8" rx="0.8"/><rect x="103" y="9" width="11.2" height="8.5" fill="#5ab8ea"/><circle cx="106.5" cy="12.5" r="2.3" fill="#f0b030"/><rect x="104" y="15" width="9" height="1.6" fill="#1a70c0"/><rect x="108" y="21.7" width="1.8" height="1" fill="#999" rx="0.5"/><path d="M125.5 9.2Q125.5 7.7 127 7.7H130.5L132 9H136.6Q138.1 9 138.1 10.5V18.9H125.5z" fill="#f5c542"/><rect x="125.5" y="13" width="12.6" height="6" fill="#2a7fd4"/><rect x="125.5" y="12" width="12.6" height="1.4" fill="#ffd866"/><rect x="130.9" y="21.7" width="1.8" height="1" fill="#999" rx="0.5"/><rect x="147.9" y="9" width="13.3" height="9" fill="#e8e8e8" rx="0.6"/><rect x="151.5" y="9.8" width="6" height="7.4" fill="#1a70d8"/><path d="M172 18L181 9" stroke="#9a9a9a" stroke-width="2.4" stroke-linecap="round"/><path d="M174 16L179 11" stroke="#d8d8d8" stroke-width="1"/><rect x="194" y="9" width="12.7" height="9.5" fill="#8fd0f5"/><path d="M194 13H196L197 11L198 15L199.5 10.5L201 14L202.5 12L204 14L206.7 13V9H194z" fill="#1060b0"/><path d="M217 17.5Q216 13 219.5 12.5Q220 8.5 223.5 8.5Q227 8.5 227.5 12Q230 12.5 229.8 15.5Q229.5 17.5 227.5 17.5z" fill="#f4f8ff" stroke="#2a90e0" stroke-width="1.3"/><path d="M222 17.5V15.5Q223.2 13.5 224.4 15.5V17.5" fill="#2a6fc0"/><ellipse cx="246" cy="14" rx="5.8" ry="4.2" fill="#d8c030"/><path d="M241 19L250 9" stroke="#4a90d0" stroke-width="1.2"/><circle cx="249" cy="9.5" r="2" fill="#9ad040"/><rect x="263" y="7.5" width="10" height="8" fill="#2a6ae0" rx="0.5"/><rect x="264" y="8.5" width="8" height="6" fill="#4a8af0"/><rect x="265" y="16" width="6" height="2" fill="#c8c8c8"/><circle cx="273" cy="17" r="2.8" fill="#e8e8e8"/><path d="M271.8 17.1L272.7 18L274.3 16" stroke="#3a9a3a" stroke-width="0.8" fill="none"/><path d="M286 8Q292 6 298 9" stroke="#c8c8c8" stroke-width="0.9" fill="none"/><rect x="288" y="11.5" width="8" height="4" fill="#9a9a9a"/><path d="M285.5 18Q292 16.5 298.5 19" stroke="#c8c8c8" stroke-width="0.9" fill="none"/><path d="M311 7.5H322L319.5 19H308.5z" fill="#2f6fd6"/><path d="M312.5 10.5L316 13.3L312 16" stroke="#fff" stroke-width="0.9" fill="none"/><rect x="315.5" y="16" width="3" height="0.8" fill="#fff"/><rect x="331.3" y="8" width="12.7" height="11" fill="#111" stroke="#666" stroke-width="0.7" rx="0.8"/><rect x="331.6" y="8.3" width="12.1" height="1.8" fill="#666"/><path d="M333 12L334.5 13L333 14" stroke="#ddd" stroke-width="0.6" fill="none"/><rect x="354.4" y="7.5" width="10.5" height="12.5" fill="#e8f0e0"/><rect x="354.4" y="15" width="10.5" height="5" fill="#5ab030"/><path d="M360 16L366.5 6.5" stroke="#e0a020" stroke-width="1.2"/><rect x="359.6" y="21.7" width="1.8" height="1" fill="#999" rx="0.5"/><rect x="384" y="7.5" width="5" height="4" fill="#2a50d0"/><rect x="378" y="14" width="5" height="4" fill="#2a50d0"/><path d="M381 14L386 11.5" stroke="#f0d020" stroke-width="1.4"/><rect x="400" y="8" width="11" height="11" fill="#15161a"/><path d="M403.5 9.5L408 13.5L403.5 17.5" stroke="#f0b400" stroke-width="1.8" fill="none"/><rect x="425" y="7.5" width="10.5" height="12" fill="#f08aa0" rx="1"/><rect x="423.9" y="8.5" width="9.5" height="11.5" fill="#e85070" rx="1"/><path d="M426.5 12L428.6 10.5L430.7 12L430.2 15.5L428.6 17L427 15.5z" fill="#f8c0cc"/><path d="M455.5 7L459.4 8.8V18.7L455.5 20.5L448 13.5L445.3 15.7L446.3 13.7L445.3 11.7L448 13.9" fill="#2a9df0"/><path d="M455.5 7L446 15L447 16L455.5 11.5z" fill="#1f7ac8"/><path d="M455.5 20.5L446 12.5L447 11.5L455.5 16z" fill="#3aa9f8"/><rect x="468.4" y="8" width="14" height="11" fill="#2a2a2a" stroke="#888" stroke-width="0.6" rx="1"/><path d="M470.5 11.5L472.5 13L470.5 14.5" stroke="#eee" stroke-width="0.7" fill="none"/><rect x="473.5" y="15.5" width="3" height="0.7" fill="#eee"/><rect x="474.6" y="21.7" width="1.8" height="1" fill="#999" rx="0.5"/><rect x="491.5" y="8" width="12.4" height="11" fill="#f2f2f2" rx="0.6"/><rect x="493.5" y="10.5" width="4" height="6.5" fill="#3a9a5a"/><rect x="498" y="10.5" width="4.5" height="6.5" fill="#c8d8e8"/><rect x="497.1" y="21.7" width="1.8" height="1" fill="#999" rx="0.5"/><g transform="translate(521.2 13.5)"><circle r="5" fill="#b8c0cc"/><rect x="-1.3" y="-6.6" width="2.6" height="3" fill="#b8c0cc" transform="rotate(0)"/><rect x="-1.3" y="-6.6" width="2.6" height="3" fill="#b8c0cc" transform="rotate(60)"/><rect x="-1.3" y="-6.6" width="2.6" height="3" fill="#b8c0cc" transform="rotate(120)"/><rect x="-1.3" y="-6.6" width="2.6" height="3" fill="#b8c0cc" transform="rotate(180)"/><rect x="-1.3" y="-6.6" width="2.6" height="3" fill="#b8c0cc" transform="rotate(240)"/><rect x="-1.3" y="-6.6" width="2.6" height="3" fill="#b8c0cc" transform="rotate(300)"/><circle r="2.6" fill="#1a5fd0"/></g><rect x="520.3" y="21.7" width="1.8" height="1" fill="#999" rx="0.5"/><rect x="533.6" y="3" width="21.4" height="21" fill="#2c3038" rx="2.5"/><rect x="538" y="7.5" width="13" height="11" fill="#333a44" stroke="#6a8aa8" stroke-width="0.6"/><rect x="538" y="7.5" width="13" height="1.5" fill="#3a90d0"/><path d="M542.5 12.5Q542.5 10.5 545 10.5Q547.5 10.5 547.5 12.5V15H544.5V16H547.5" fill="#3776ab"/><path d="M547.5 14.5Q549.5 14.5 549.5 16.5Q549.5 19 547 19Q544.5 19 544.5 17V16" fill="#ffd43b"/><rect x="540" y="22.3" width="8.5" height="1.6" fill="#4cc2ff" rx="0.8"/><circle cx="817" cy="12" r="3.2" fill="#f0b030"/><path d="M815 19Q812.5 19 812.8 16.5Q813 14.5 815.5 14.5Q816.5 11.5 820 11.8Q823 12 823.5 14.5Q826.5 14.5 826.5 16.8Q826.5 19 824 19z" fill="#c8dcf0"/><circle cx="824.5" cy="7.8" r="3.6" fill="#e86a6a"/><path d="M898.8 14.5L901.5 11.8L904.2 14.5" stroke="#e0e0e0" stroke-width="0.8" fill="none"/><rect x="917.6" y="8.5" width="2.6" height="5.5" rx="1.3" fill="#4aaee8"/><path d="M916.5 12.5Q916.5 15.5 918.9 15.5Q921.3 15.5 921.3 12.5M918.9 15.5V17" stroke="#4aaee8" stroke-width="0.6" fill="none"/><rect x="931.5" y="8.5" width="6" height="7" fill="none" stroke="#e0e0e0" stroke-width="0.8"/><rect x="936" y="8" width="2.5" height="2.5" fill="#e0e0e0"/><path d="M933 15.5V18H937" stroke="#e0e0e0" stroke-width="0.7" fill="none"/><path d="M944.3 10.5H946L948.5 8.5V16.5L946 14.5H944.3z" fill="none" stroke="#e0e0e0" stroke-width="0.7"/><path d="M949.8 10.8L951.5 12.5L949.8 14.2M951.5 10.8L949.8 12.5L951.5 14.2" stroke="#e0e0e0" stroke-width="0.5" fill="none"/></svg>
<div class="t" style="left:823.6px;top:542.89px;font-size:5.0px;color:#fff;">7</div>
<div class="t" style="left:831px;top:543.30px;font-size:5.6px;color:#e8e8e8;">0°F</div>
<div class="t" style="left:831px;top:552.11px;font-size:6.0px;color:#d8d8d8;">Mostly cloudy</div>
<div class="t" style="right:10px;top:543.36px;font-size:5.9px;color:#e8e8e8;">10:18 PM</div>
<div class="t" style="right:10px;top:551.86px;font-size:6.1px;color:#e8e8e8;">1/31/2026</div>
<div class="a" style="left:0px;top:532.6px;width:1000px;height:4.699999999999932px;background:#eeeeee"></div>
</body></html>
